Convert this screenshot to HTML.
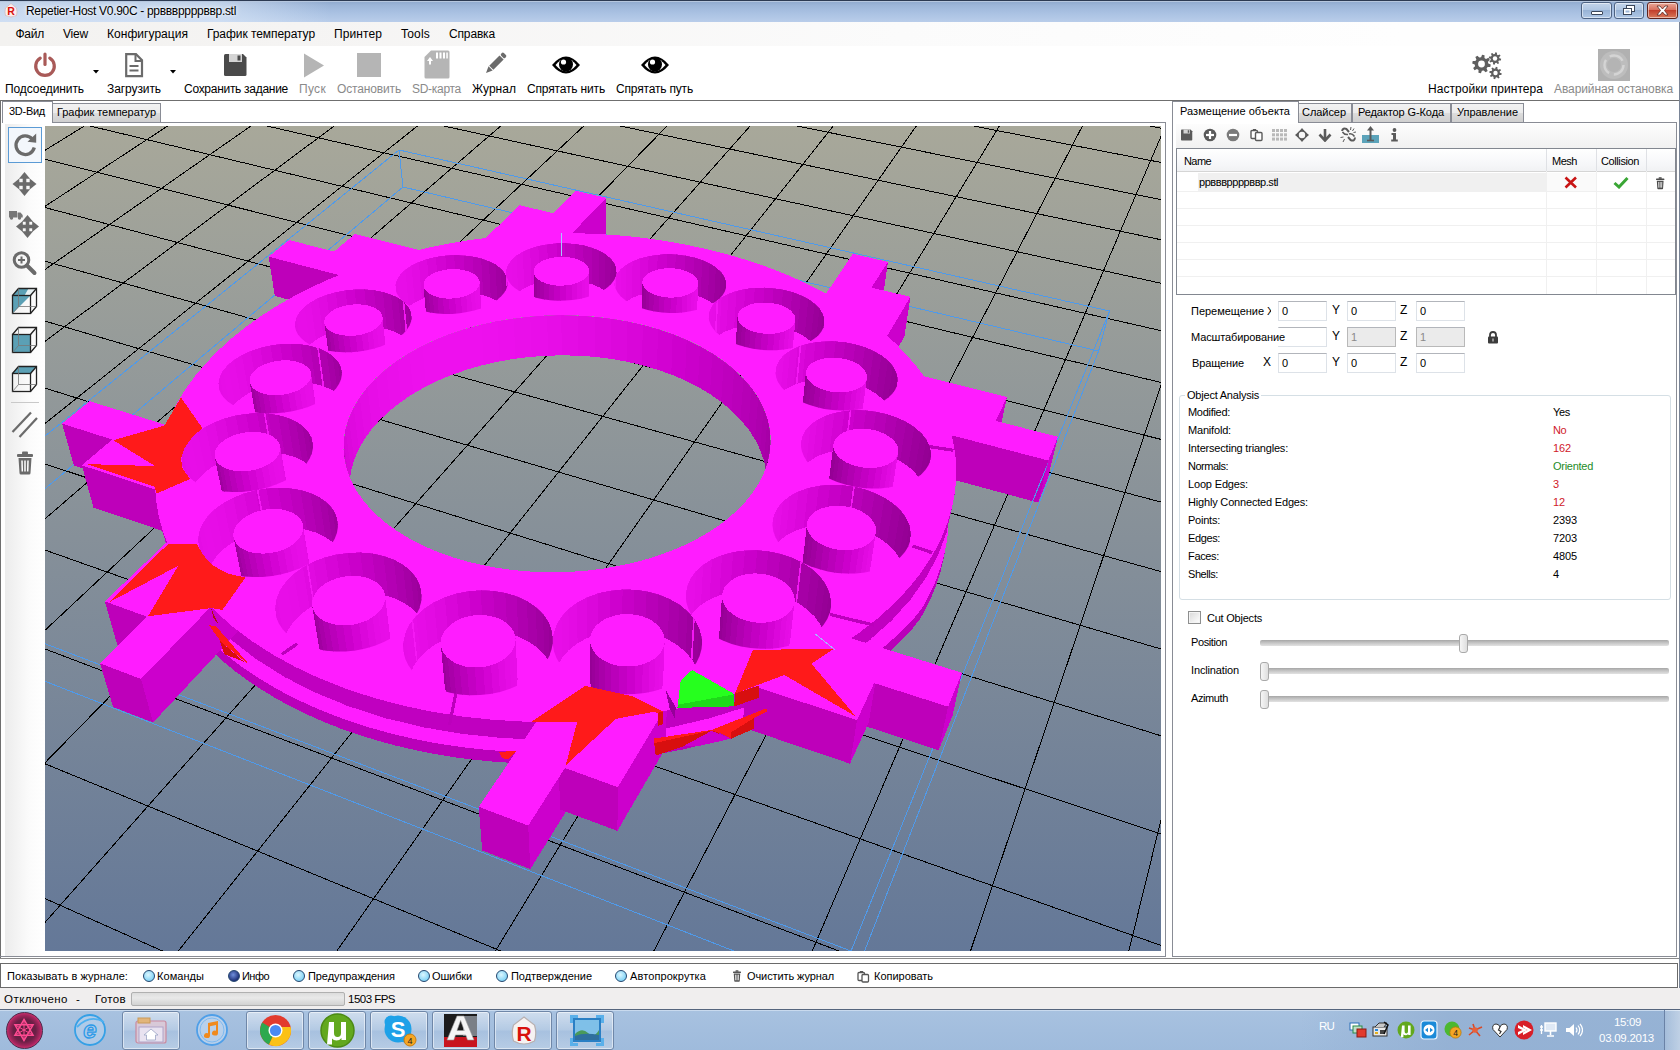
<!DOCTYPE html><html><head><meta charset="utf-8"><title>Repetier-Host</title><style>html,body{margin:0;padding:0}body{width:1680px;height:1050px;overflow:hidden;background:#fff;position:relative;font-family:"Liberation Sans",sans-serif}div,span,svg{position:absolute;box-sizing:border-box}.t{white-space:nowrap;display:block}</style></head><body><div style="left:0px;top:0px;width:1680px;height:22px;background:linear-gradient(#8ea8cc 0%,#9cb5d8 20%,#a9c1e2 55%,#b9cdea 100%);border-top:1px solid #2c3a52"></div><div style="left:0px;top:1px;width:1680px;height:1px;background:rgba(255,255,255,.35)"></div><div style="left:0px;top:2px;width:330px;height:20px;background:linear-gradient(90deg,rgba(222,234,249,.6) 0,rgba(222,234,249,.6) 65%,rgba(222,234,249,0) 100%)"></div><svg style="left:4px;top:3px" width="14" height="15" viewBox="0 0 14 15"><path d="M7,0.5 L12.5,5 Q13.5,9 12.5,12.5 Q7,15.5 1.5,12.5 Q0.5,9 1.5,5 Z" fill="#fdecec" stroke="#c9b0b0" stroke-width="0.6"/><text x="7" y="12" text-anchor="middle" font-family="Liberation Sans,sans-serif" font-weight="bold" font-size="10.5" fill="#d8100c">R</text></svg><span id="t0" class="t " style="left:26px;top:3.0px;height:16px;line-height:16px;font-size:12px;color:#000;letter-spacing:-0.307px;text-shadow:0 0 6px #fff,0 0 3px #fff;">Repetier-Host V0.90C - ррвввррррввр.stl</span><div style="left:1581px;top:2px;width:31px;height:17px;background:linear-gradient(#c3d4ea 0%,#b0c6e2 45%,#98b3d6 50%,#b0c8e6 100%);border:1px solid #4d6282;border-radius:3px;box-shadow:inset 0 0 0 1px rgba(255,255,255,.5)"></div><div style="left:1614px;top:2px;width:30px;height:17px;background:linear-gradient(#c3d4ea 0%,#b0c6e2 45%,#98b3d6 50%,#b0c8e6 100%);border:1px solid #4d6282;border-radius:3px;box-shadow:inset 0 0 0 1px rgba(255,255,255,.5)"></div><div style="left:1647px;top:2px;width:31px;height:17px;background:linear-gradient(#e9a898 0%,#d8705f 45%,#c23f2c 50%,#d9795a 100%);border:1px solid #5e231c;border-radius:3px;box-shadow:inset 0 0 0 1px rgba(255,255,255,.5)"></div><div style="left:1591px;top:11px;width:12px;height:4px;background:#fff;border:1px solid #3b4659;border-radius:1px"></div><svg style="left:1622px;top:4px" width="14" height="12" viewBox="0 0 14 12"><rect x="4.5" y="1.5" width="8" height="6" fill="#fff" stroke="#3b4659"/><rect x="1.5" y="4.5" width="8" height="6" fill="#fff" stroke="#3b4659"/><rect x="3.5" y="6.5" width="4" height="2" fill="#9db7da" stroke="none"/></svg><svg style="left:1655px;top:5px" width="15" height="11" viewBox="0 0 15 11"><path d="M2,1 L5,1 L7.5,4 L10,1 L13,1 L9.5,5.5 L13,10 L10,10 L7.5,7 L5,10 L2,10 L5.5,5.5 Z" fill="#fff" stroke="#5a2a25" stroke-width="0.8"/></svg><div style="left:0px;top:22px;width:1680px;height:24px;background:linear-gradient(90deg,#f3f2f0 0,#f5f4f3 300px,#fbfbfb 900px,#fefefe 1400px)"></div><span id="t1" class="t " style="left:15.5px;top:25.5px;height:16px;line-height:16px;font-size:12px;color:#000;letter-spacing:-0.254px;">Файл</span><span id="t2" class="t " style="left:63px;top:25.5px;height:16px;line-height:16px;font-size:12px;color:#000;letter-spacing:-0.199px;">View</span><span id="t3" class="t " style="left:107px;top:25.5px;height:16px;line-height:16px;font-size:12px;color:#000;letter-spacing:0.039px;">Конфигурация</span><span id="t4" class="t " style="left:207px;top:25.5px;height:16px;line-height:16px;font-size:12px;color:#000;letter-spacing:-0.062px;">График температур</span><span id="t5" class="t " style="left:334px;top:25.5px;height:16px;line-height:16px;font-size:12px;color:#000;letter-spacing:0.094px;">Принтер</span><span id="t6" class="t " style="left:401px;top:25.5px;height:16px;line-height:16px;font-size:12px;color:#000;letter-spacing:0.197px;">Tools</span><span id="t7" class="t " style="left:449px;top:25.5px;height:16px;line-height:16px;font-size:12px;color:#000;letter-spacing:-0.154px;">Справка</span><div style="left:0px;top:46px;width:1680px;height:54px;background:#fff"></div><div style="left:0px;top:100px;width:1680px;height:1px;background:#6f6f6f"></div><span id="t8" class="t " style="left:5px;top:81.0px;height:16px;line-height:16px;font-size:12px;color:#000;letter-spacing:-0.087px;">Подсоединить</span><span id="t9" class="t " style="left:107px;top:81.0px;height:16px;line-height:16px;font-size:12px;color:#000;letter-spacing:-0.089px;">Загрузить</span><span id="t10" class="t " style="left:184px;top:81.0px;height:16px;line-height:16px;font-size:12px;color:#000;letter-spacing:-0.284px;">Сохранить задание</span><span id="t11" class="t " style="left:299px;top:81.0px;height:16px;line-height:16px;font-size:12px;color:#8a8a8a;letter-spacing:0.312px;">Пуск</span><span id="t12" class="t " style="left:337px;top:81.0px;height:16px;line-height:16px;font-size:12px;color:#8a8a8a;letter-spacing:-0.150px;">Остановить</span><span id="t13" class="t " style="left:412px;top:81.0px;height:16px;line-height:16px;font-size:12px;color:#8a8a8a;letter-spacing:-0.289px;">SD-карта</span><span id="t14" class="t " style="left:472px;top:81.0px;height:16px;line-height:16px;font-size:12px;color:#000;letter-spacing:0.034px;">Журнал</span><span id="t15" class="t " style="left:527px;top:81.0px;height:16px;line-height:16px;font-size:12px;color:#000;letter-spacing:-0.165px;">Спрятать нить</span><span id="t16" class="t " style="left:616px;top:81.0px;height:16px;line-height:16px;font-size:12px;color:#000;letter-spacing:-0.178px;">Спрятать путь</span><span id="t17" class="t " style="left:1428px;top:81.0px;height:16px;line-height:16px;font-size:12px;color:#000;letter-spacing:0.052px;">Настройки принтера</span><span id="t18" class="t " style="left:1554px;top:81.0px;height:16px;line-height:16px;font-size:12px;color:#8a8a8a;letter-spacing:-0.090px;">Аварийная остановка</span><svg style="left:33px;top:52px" width="24" height="26" viewBox="0 0 24 26"><path d="M7.2,6.2 A9.3,9.3 0 1 0 16.8,6.2" fill="none" stroke="#a95a58" stroke-width="3.2" stroke-linecap="round"/><line x1="12" y1="2" x2="12" y2="12.5" stroke="#a95a58" stroke-width="3.2" stroke-linecap="round"/></svg><svg style="left:93px;top:70px" width="7" height="4" viewBox="0 0 7 4"><polygon points="0,0 6,0 3,3.5" fill="#000"/></svg><svg style="left:124px;top:53px" width="20" height="25" viewBox="0 0 20 25"><path d="M2.2,1.2 H12 L18,7.2 V23.2 H2.2 Z" fill="#fff" stroke="#6b6b6b" stroke-width="2.2" stroke-linejoin="miter"/><path d="M11.5,1.5 V8 H18" fill="none" stroke="#6b6b6b" stroke-width="2"/><line x1="5.5" y1="13" x2="14.5" y2="13" stroke="#6b6b6b" stroke-width="2"/><line x1="5.5" y1="17.5" x2="14.5" y2="17.5" stroke="#6b6b6b" stroke-width="2"/></svg><svg style="left:170px;top:70px" width="7" height="4" viewBox="0 0 7 4"><polygon points="0,0 6,0 3,3.5" fill="#000"/></svg><svg style="left:224px;top:53px" width="24" height="24" viewBox="0 0 24 24"><path d="M1.5,1 h17.5 l3.5,3.5 v17 q0,1.5 -1.5,1.5 h-19.5 q-1.5,0 -1.5,-1.5 v-19 q0,-1.5 1.5,-1.5 z" fill="#4a4a4a"/><rect x="5" y="1" width="13" height="8" fill="#d4d4d4"/><rect x="13.5" y="2.5" width="3" height="5" fill="#4a4a4a"/></svg><svg style="left:303px;top:53px" width="22" height="25" viewBox="0 0 22 25"><polygon points="1,0.5 21,12.5 1,24.5" fill="#b5b5b5"/></svg><svg style="left:357px;top:53px" width="24" height="24" viewBox="0 0 24 24"><rect x="0" y="0" width="24" height="24" fill="#b5b5b5"/></svg><svg style="left:424px;top:50px" width="26" height="29" viewBox="0 0 26 29"><path d="M7,0.5 H24 Q25.5,0.5 25.5,2 V27 Q25.5,28.5 24,28.5 H2 Q0.5,28.5 0.5,27 V7 Z" fill="#b5b5b5"/><g fill="#fff"><rect x="12" y="2.5" width="2" height="6"/><rect x="15.5" y="2.5" width="2" height="6"/><rect x="19" y="2.5" width="2" height="6"/><rect x="22.3" y="2.5" width="1.5" height="6"/><polygon points="6,7 3,11 5,11 5,14.5 7,14.5 7,11 9,11"/></g></svg><svg style="left:482px;top:52px" width="25" height="25" viewBox="0 0 25 25"><g transform="rotate(45 12.5 12.5)"><rect x="9.6" y="2.5" width="5.8" height="14.5" fill="#6b6b6b"/><rect x="9.6" y="-2.2" width="5.8" height="3.8" rx="1.5" fill="#6b6b6b"/><polygon points="9.6,18 15.4,18 12.5,24.5" fill="#6b6b6b"/></g></svg><svg style="left:551px;top:54px" width="30" height="22" viewBox="0 0 30 22"><path d="M1,11 Q15,-6 29,11 Q15,28 1,11 Z" fill="#000"/><path d="M4.5,11 Q15,-1.5 25.5,11 Q15,23.5 4.5,11 Z" fill="#fff"/><circle cx="15" cy="10.5" r="7" fill="#000"/><circle cx="12.5" cy="8" r="2.6" fill="#fff"/></svg><svg style="left:640px;top:54px" width="30" height="22" viewBox="0 0 30 22"><path d="M1,11 Q15,-6 29,11 Q15,28 1,11 Z" fill="#000"/><path d="M4.5,11 Q15,-1.5 25.5,11 Q15,23.5 4.5,11 Z" fill="#fff"/><circle cx="15" cy="10.5" r="7" fill="#000"/><circle cx="12.5" cy="8" r="2.6" fill="#fff"/></svg><svg style="left:1471px;top:51px" width="32" height="30" viewBox="0 0 32 30"><path d="M19.78,13.56 L19.29,16.04 L16.62,15.97 L15.59,17.51 L16.67,19.96 L14.57,21.36 L12.72,19.43 L10.91,19.79 L9.94,22.28 L7.46,21.79 L7.53,19.12 L5.99,18.09 L3.54,19.17 L2.14,17.07 L4.07,15.22 L3.71,13.41 L1.22,12.44 L1.71,9.96 L4.38,10.03 L5.41,8.49 L4.33,6.04 L6.43,4.64 L8.28,6.57 L10.09,6.21 L11.06,3.72 L13.54,4.21 L13.47,6.88 L15.01,7.91 L17.46,6.83 L18.86,8.93 L16.93,10.78 L17.29,12.59Z" fill="#5f5f5f"/><circle cx="10.5" cy="13" r="3.4" fill="#fff"/><path d="M30.19,7.87 L29.86,9.52 L27.96,9.42 L27.29,10.42 L28.11,12.14 L26.71,13.08 L25.44,11.66 L24.26,11.89 L23.63,13.69 L21.98,13.36 L22.08,11.46 L21.08,10.79 L19.36,11.61 L18.42,10.21 L19.84,8.94 L19.61,7.76 L17.81,7.13 L18.14,5.48 L20.04,5.58 L20.71,4.58 L19.89,2.86 L21.29,1.92 L22.56,3.34 L23.74,3.11 L24.37,1.31 L26.02,1.64 L25.92,3.54 L26.92,4.21 L28.64,3.39 L29.58,4.79 L28.16,6.06 L28.39,7.24Z" fill="#5f5f5f"/><circle cx="24" cy="7.5" r="2.2" fill="#fff"/><path d="M30.69,22.37 L30.36,24.02 L28.46,23.92 L27.79,24.92 L28.61,26.64 L27.21,27.58 L25.94,26.16 L24.76,26.39 L24.13,28.19 L22.48,27.86 L22.58,25.96 L21.58,25.29 L19.86,26.11 L18.92,24.71 L20.34,23.44 L20.11,22.26 L18.31,21.63 L18.64,19.98 L20.54,20.08 L21.21,19.08 L20.39,17.36 L21.79,16.42 L23.06,17.84 L24.24,17.61 L24.87,15.81 L26.52,16.14 L26.42,18.04 L27.42,18.71 L29.14,17.89 L30.08,19.29 L28.66,20.56 L28.89,21.74Z" fill="#5f5f5f"/><circle cx="24.5" cy="22" r="2.2" fill="#fff"/></svg><svg style="left:1598px;top:49px" width="32" height="32" viewBox="0 0 32 32"><rect width="32" height="32" fill="#b1b1b1"/><circle cx="16" cy="16" r="14" fill="#bdbdbd"/><circle cx="16" cy="16" r="9.5" fill="none" stroke="#d4d4d4" stroke-width="2.4" stroke-dasharray="15 5"/><circle cx="16" cy="16" r="7" fill="#b4b4b4"/></svg><div style="left:0px;top:101px;width:1px;height:858px;background:#6f6f6f"></div><div style="left:2px;top:122px;width:1164px;height:1px;background:#898c95"></div><div style="left:1165px;top:122px;width:1px;height:835px;background:#898c95"></div><div style="left:0px;top:956px;width:1166px;height:1px;background:#898c95"></div><div style="left:0px;top:958px;width:1680px;height:1px;background:#8a8a8a"></div><div style="left:2px;top:101px;width:51px;height:22px;background:#fff;border:1px solid #898c95;border-bottom:none"></div><span id="t19" class="t " style="left:9px;top:104.0px;height:15px;line-height:15px;font-size:11px;color:#000;letter-spacing:-0.271px;">3D-Вид</span><div style="left:52px;top:103px;width:109px;height:19px;background:linear-gradient(#f2f2f2,#ebebeb 50%,#dddddd 50%,#cfcfcf);border:1px solid #898c95;border-bottom:none"></div><span id="t20" class="t " style="left:57px;top:105.0px;height:15px;line-height:15px;font-size:11px;color:#000;letter-spacing:-0.057px;">График температур</span><div style="left:5px;top:124px;width:40px;height:832px;background:linear-gradient(90deg,#ececec,#fbfbfb 60%,#fff)"></div><div style="left:8px;top:127px;width:34px;height:36px;background:#f3f7fc;border:1px solid #5b9bd5"></div><svg style="left:12px;top:132px" width="26" height="26" viewBox="0 0 26 26"><path d="M20.2,7 A9.3,9.3 0 1 0 22.3,15.5" fill="none" stroke="#6b6b6b" stroke-width="3.3"/><polygon points="15.5,9.8 24.2,1.5 24.2,10.8" fill="#6b6b6b"/></svg><svg style="left:11px;top:170px" width="28" height="28" viewBox="0 0 28 28"><g stroke="#6b6b6b" stroke-width="3.6" fill="#6b6b6b" stroke-linejoin="miter"><line x1="5.5" y1="14" x2="21.5" y2="14"/><line x1="13.5" y1="6" x2="13.5" y2="22"/></g><g fill="#6b6b6b"><polygon points="1.5,14 8.3,8.399999999999999 8.3,19.6"/><polygon points="25.5,14 18.7,8.399999999999999 18.7,19.6"/><polygon points="13.5,2 7.8999999999999995,8.8 19.1,8.8"/><polygon points="13.5,26 7.8999999999999995,19.2 19.1,19.2"/></g></svg><svg style="left:8px;top:208px" width="34" height="34" viewBox="0 0 34 34"><g fill="#777"><path d="M1,3 h8 v6.5 h-8 z M9.5,4.5 h3 l2.2,2.6 v2.4 h-5.2 z"/><circle cx="3.5" cy="10" r="1.7"/><circle cx="11.5" cy="10" r="1.7"/></g><g stroke="#6b6b6b" stroke-width="3.6" fill="#6b6b6b" stroke-linejoin="miter"><line x1="12.0" y1="18.5" x2="27.0" y2="18.5"/><line x1="19.5" y1="11.0" x2="19.5" y2="26.0"/></g><g fill="#6b6b6b"><polygon points="8.0,18.5 14.8,12.899999999999999 14.8,24.1"/><polygon points="31.0,18.5 24.2,12.899999999999999 24.2,24.1"/><polygon points="19.5,7.0 13.899999999999999,13.8 25.1,13.8"/><polygon points="19.5,30.0 13.899999999999999,23.2 25.1,23.2"/></g></svg><svg style="left:11px;top:249px" width="28" height="28" viewBox="0 0 28 28"><circle cx="10.5" cy="11" r="7.3" fill="none" stroke="#6b6b6b" stroke-width="3"/><line x1="16" y1="16.5" x2="23.5" y2="24" stroke="#6b6b6b" stroke-width="4" stroke-linecap="round"/><line x1="7" y1="11" x2="14" y2="11" stroke="#6b6b6b" stroke-width="2"/><line x1="10.5" y1="7.5" x2="10.5" y2="14.5" stroke="#6b6b6b" stroke-width="2"/></svg><svg style="left:11px;top:287px" width="28" height="28" viewBox="0 0 28 28"><polygon points="1.5,8.5 19.5,8.5 1.5,26.5" fill="#5ba0b5"/><polygon points="1.5,8.5 7.5,1.5 25.5,1.5 19.5,8.5" fill="#e8f2f5"/><polygon points="1.5,8.5 7.5,1.5 17.5,1.5 13.5,8.5" fill="#5ba0b5"/><g fill="none" stroke="#222" stroke-width="1.3"><rect x="1.5" y="8.5" width="18.0" height="18.0"/><polyline points="1.5,8.5 7.5,1.5 25.5,1.5 25.5,19.5 19.5,26.5"/><line x1="19.5" y1="8.5" x2="25.5" y2="1.5"/></g><g fill="none" stroke="#777" stroke-width="0.8"><polyline points="7.5,1.5 7.5,19.5 25.5,19.5"/><line x1="1.5" y1="26.5" x2="7.5" y2="19.5"/></g></svg><svg style="left:11px;top:326px" width="28" height="28" viewBox="0 0 28 28"><rect x="1.5" y="8.5" width="18.0" height="18.0" fill="#5ba0b5"/><g fill="none" stroke="#222" stroke-width="1.3"><rect x="1.5" y="8.5" width="18.0" height="18.0"/><polyline points="1.5,8.5 7.5,1.5 25.5,1.5 25.5,19.5 19.5,26.5"/><line x1="19.5" y1="8.5" x2="25.5" y2="1.5"/></g><g fill="none" stroke="#777" stroke-width="0.8"><polyline points="7.5,1.5 7.5,19.5 25.5,19.5"/><line x1="1.5" y1="26.5" x2="7.5" y2="19.5"/></g></svg><svg style="left:11px;top:365px" width="28" height="28" viewBox="0 0 28 28"><polygon points="1.5,8.5 7.5,1.5 25.5,1.5 19.5,8.5" fill="#5ba0b5"/><g fill="none" stroke="#222" stroke-width="1.3"><rect x="1.5" y="8.5" width="18.0" height="18.0"/><polyline points="1.5,8.5 7.5,1.5 25.5,1.5 25.5,19.5 19.5,26.5"/><line x1="19.5" y1="8.5" x2="25.5" y2="1.5"/></g><g fill="none" stroke="#777" stroke-width="0.8"><polyline points="7.5,1.5 7.5,19.5 25.5,19.5"/><line x1="1.5" y1="26.5" x2="7.5" y2="19.5"/></g></svg><div style="left:11px;top:402px;width:28px;height:1px;background:#c9c9c9"></div><svg style="left:11px;top:410px" width="28" height="28" viewBox="0 0 28 28"><line x1="1.5" y1="22" x2="20" y2="2.5" stroke="#6b6b6b" stroke-width="2.2"/><line x1="8.5" y1="27" x2="26" y2="8" stroke="#6b6b6b" stroke-width="2.2"/></svg><svg style="left:14.5px;top:451px" width="20" height="25" viewBox="0 0 20 25"><g fill="#6b6b6b"><rect x="2" y="3" width="16" height="3" rx="1"/><rect x="7" y="0.5" width="6" height="3" rx="1"/><path d="M3.5,7 h13 l-1,15 q0,1.5 -1.5,1.5 h-8 q-1.5,0 -1.5,-1.5 z"/></g><g stroke="#fff" stroke-width="1.5"><line x1="7" y1="9.5" x2="7.3" y2="20.5"/><line x1="10" y1="9.5" x2="10" y2="20.5"/><line x1="13" y1="9.5" x2="12.7" y2="20.5"/></g></svg><svg style="position:absolute;left:45px;top:126px" width="1116" height="825" viewBox="45 126 1116 825"><defs><linearGradient id="gBg" x1="0" y1="0" x2="0" y2="1"><stop offset="0" stop-color="#a8a89a"/><stop offset="1" stop-color="#647898"/></linearGradient><linearGradient id="gHole" gradientUnits="userSpaceOnUse" x1="344" y1="0" x2="770" y2="0"><stop offset="0" stop-color="#ea12ea"/><stop offset="0.5" stop-color="#d604d6"/><stop offset="0.82" stop-color="#b600b6"/><stop offset="1" stop-color="#960096"/></linearGradient><linearGradient id="gWall" x1="0" y1="0" x2="1" y2="0"><stop offset="0" stop-color="#c600c6"/><stop offset="0.4" stop-color="#d806d8"/><stop offset="0.75" stop-color="#b800b8"/><stop offset="1" stop-color="#980098"/></linearGradient><linearGradient id="gPeg" x1="0" y1="0" x2="1" y2="0"><stop offset="0" stop-color="#a600a6"/><stop offset="0.2" stop-color="#c400c4"/><stop offset="0.55" stop-color="#de0cde"/><stop offset="0.85" stop-color="#c600c6"/><stop offset="1" stop-color="#b000b0"/></linearGradient><clipPath id="cHoleT"><path d="M453.1,557.4 L466.8,561.4 L481.0,564.8 L495.7,567.6 L510.7,569.8 L525.9,571.3 L541.3,572.1 L556.9,572.2 L572.4,571.7 L587.8,570.5 L603.0,568.6 L618.0,566.0 L632.7,562.9 L646.8,559.1 L660.5,554.7 L673.6,549.8 L686.1,544.4 L697.9,538.4 L708.9,532.0 L719.1,525.3 L728.4,518.1 L736.9,510.6 L744.4,502.9 L751.0,494.9 L756.7,486.8 L761.4,478.4 L765.1,470.0 L767.9,461.5 L769.7,453.0 L770.6,444.5 L770.6,436.1 L769.6,427.8 L767.8,419.6 L765.1,411.5 L761.5,403.6 L757.2,395.9 L752.1,388.5 L746.3,381.4 L739.7,374.5 L732.5,367.9 L724.7,361.7 L716.2,355.7 L707.3,350.2 L697.8,345.0 L687.8,340.2 L677.4,335.8 L666.7,331.8 L655.5,328.2 L644.1,325.1 L632.3,322.3 L620.4,320.0 L608.2,318.2 L595.9,316.7 L583.4,315.7 L570.9,315.2 L558.3,315.1 L545.7,315.4 L533.2,316.2 L520.7,317.5 L508.3,319.2 L496.1,321.3 L484.1,323.8 L472.3,326.8 L460.7,330.2 L449.5,334.1 L438.6,338.3 L428.1,342.9 L418.0,348.0 L408.4,353.4 L399.3,359.1 L390.8,365.2 L382.8,371.7 L375.5,378.4 L368.8,385.5 L362.8,392.8 L357.6,400.4 L353.1,408.2 L349.5,416.2 L346.7,424.3 L344.7,432.6 L343.6,441.0 L343.5,449.5 L344.3,458.0 L346.0,466.5 L348.8,475.0 L352.4,483.3 L357.1,491.6 L362.7,499.6 L369.3,507.5 L376.8,515.1 L385.2,522.4 L394.6,529.3 L404.8,535.9 L415.8,542.0 L427.5,547.6 L440.0,552.8Z"/></clipPath><clipPath id="cg14"><path d="M536.1,297.8 L543.0,299.3 L550.1,300.2 L557.5,300.7 L565.0,300.6 L572.4,300.0 L579.5,298.9 L586.4,297.3 L592.7,295.3 L598.5,292.8 L603.7,290.0 L608.0,286.9 L611.6,283.5 L614.2,279.9 L615.9,276.2 L616.7,272.4 L616.5,268.7 L615.4,265.0 L613.3,261.4 L610.4,258.0 L606.7,254.9 L602.3,252.0 L597.2,249.5 L591.5,247.4 L585.3,245.6 L578.8,244.3 L571.9,243.5 L564.9,243.1 L557.9,243.1 L550.9,243.7 L544.1,244.7 L537.5,246.1 L531.3,247.9 L525.6,250.2 L520.5,252.8 L516.0,255.7 L512.3,259.0 L509.4,262.4 L507.3,266.0 L506.1,269.7 L505.9,273.5 L506.7,277.3 L508.4,280.9 L511.0,284.5 L514.5,287.8 L518.9,290.8 L524.0,293.6 L529.8,295.9Z"/></clipPath><clipPath id="cg0"><path d="M423.3,311.0 L430.1,312.5 L437.2,313.5 L444.7,313.9 L452.2,313.9 L459.7,313.3 L467.1,312.1 L474.2,310.5 L480.9,308.4 L487.0,305.9 L492.5,303.0 L497.2,299.8 L501.2,296.3 L504.2,292.7 L506.3,288.9 L507.5,285.0 L507.7,281.2 L507.0,277.4 L505.3,273.7 L502.7,270.3 L499.3,267.1 L495.1,264.1 L490.2,261.6 L484.6,259.4 L478.6,257.6 L472.1,256.2 L465.3,255.4 L458.2,255.0 L451.1,255.0 L444.0,255.6 L436.9,256.6 L430.1,258.1 L423.7,260.0 L417.7,262.3 L412.2,264.9 L407.4,267.9 L403.2,271.2 L399.9,274.7 L397.5,278.4 L395.9,282.3 L395.3,286.1 L395.6,290.0 L397.0,293.7 L399.3,297.3 L402.5,300.8 L406.5,303.9 L411.4,306.7 L417.1,309.1Z"/></clipPath><clipPath id="cg13"><path d="M647.7,310.0 L654.7,311.5 L662.1,312.5 L669.6,312.9 L677.1,312.9 L684.5,312.3 L691.6,311.1 L698.4,309.5 L704.6,307.4 L710.2,304.9 L715.1,302.0 L719.2,298.8 L722.4,295.4 L724.7,291.7 L726.0,287.9 L726.4,284.1 L725.8,280.2 L724.3,276.4 L721.9,272.8 L718.6,269.4 L714.5,266.1 L709.7,263.2 L704.3,260.7 L698.3,258.5 L691.9,256.7 L685.2,255.4 L678.2,254.5 L671.1,254.1 L664.0,254.1 L656.9,254.7 L650.1,255.7 L643.7,257.2 L637.6,259.1 L632.1,261.4 L627.1,264.0 L622.9,267.0 L619.5,270.3 L616.9,273.8 L615.2,277.5 L614.4,281.3 L614.6,285.2 L615.8,289.0 L617.8,292.8 L620.9,296.4 L624.8,299.8 L629.5,302.9 L634.9,305.7 L641.0,308.1Z"/></clipPath><clipPath id="cg1"><path d="M321.6,349.1 L328.4,350.7 L335.7,351.8 L343.4,352.3 L351.2,352.2 L359.1,351.5 L366.8,350.3 L374.3,348.6 L381.4,346.3 L388.0,343.6 L393.9,340.6 L399.1,337.1 L403.5,333.4 L407.0,329.5 L409.6,325.4 L411.1,321.3 L411.7,317.2 L411.3,313.1 L409.9,309.2 L407.5,305.5 L404.3,302.1 L400.2,299.0 L395.4,296.2 L389.9,293.9 L383.8,292.0 L377.2,290.6 L370.3,289.6 L363.0,289.2 L355.6,289.3 L348.2,289.8 L340.9,290.9 L333.7,292.5 L326.9,294.5 L320.4,297.0 L314.5,299.8 L309.2,303.1 L304.6,306.6 L300.9,310.3 L298.0,314.3 L296.0,318.4 L295.0,322.5 L295.0,326.6 L296.0,330.6 L298.0,334.5 L301.0,338.1 L304.9,341.5 L309.7,344.5 L315.3,347.0Z"/></clipPath><clipPath id="cg12"><path d="M745.6,347.1 L753.0,348.7 L760.7,349.8 L768.5,350.3 L776.3,350.2 L783.9,349.5 L791.1,348.3 L798.0,346.6 L804.2,344.4 L809.8,341.7 L814.5,338.6 L818.5,335.2 L821.4,331.5 L823.5,327.6 L824.5,323.5 L824.5,319.4 L823.5,315.3 L821.6,311.3 L818.8,307.4 L815.0,303.7 L810.5,300.3 L805.3,297.2 L799.5,294.5 L793.1,292.1 L786.3,290.3 L779.2,288.8 L771.9,287.9 L764.6,287.5 L757.2,287.5 L750.0,288.1 L743.1,289.2 L736.6,290.7 L730.5,292.8 L725.0,295.2 L720.2,298.1 L716.1,301.3 L712.8,304.8 L710.5,308.5 L709.1,312.4 L708.6,316.5 L709.1,320.6 L710.7,324.7 L713.2,328.7 L716.6,332.6 L721.0,336.2 L726.1,339.5 L732.0,342.5 L738.5,345.1Z"/></clipPath><clipPath id="cg2"><path d="M244.8,410.0 L251.9,411.7 L259.5,412.9 L267.6,413.4 L275.8,413.3 L284.1,412.6 L292.4,411.3 L300.4,409.3 L308.0,406.9 L315.2,403.9 L321.6,400.4 L327.4,396.6 L332.2,392.5 L336.2,388.2 L339.1,383.7 L341.1,379.1 L341.9,374.5 L341.8,370.1 L340.5,365.7 L338.3,361.7 L335.2,357.9 L331.1,354.4 L326.2,351.4 L320.6,348.8 L314.3,346.7 L307.5,345.1 L300.2,344.1 L292.6,343.6 L284.9,343.7 L277.0,344.3 L269.2,345.5 L261.6,347.3 L254.2,349.5 L247.3,352.2 L240.9,355.4 L235.1,358.9 L230.0,362.8 L225.8,367.0 L222.4,371.3 L220.1,375.9 L218.7,380.4 L218.4,385.0 L219.2,389.4 L221.0,393.7 L223.9,397.8 L227.8,401.5 L232.6,404.8 L238.3,407.6Z"/></clipPath><clipPath id="cg11"><path d="M816.4,407.1 L824.3,408.9 L832.5,410.0 L840.7,410.5 L848.9,410.5 L856.9,409.7 L864.4,408.4 L871.5,406.5 L877.9,404.0 L883.6,401.0 L888.4,397.6 L892.3,393.8 L895.2,389.7 L897.0,385.4 L897.8,380.9 L897.6,376.4 L896.2,371.9 L893.9,367.4 L890.7,363.1 L886.5,359.1 L881.5,355.3 L875.9,351.9 L869.5,348.8 L862.7,346.3 L855.4,344.2 L847.9,342.6 L840.2,341.6 L832.4,341.1 L824.7,341.2 L817.2,341.8 L810.0,343.0 L803.2,344.7 L797.0,347.0 L791.4,349.7 L786.5,352.8 L782.4,356.3 L779.2,360.2 L777.0,364.3 L775.7,368.7 L775.5,373.2 L776.3,377.7 L778.2,382.3 L781.1,386.7 L785.0,391.0 L789.8,395.0 L795.4,398.7 L801.8,401.9 L808.9,404.8Z"/></clipPath><clipPath id="cg3"><path d="M208.5,488.1 L216.1,490.1 L224.2,491.4 L232.7,492.0 L241.5,491.9 L250.4,491.1 L259.2,489.6 L267.8,487.4 L276.0,484.6 L283.7,481.2 L290.7,477.3 L296.9,473.0 L302.2,468.3 L306.5,463.4 L309.8,458.3 L311.9,453.1 L313.0,447.9 L312.9,442.9 L311.7,438.0 L309.5,433.4 L306.2,429.1 L302.0,425.2 L296.9,421.8 L291.0,418.9 L284.4,416.5 L277.2,414.7 L269.5,413.6 L261.5,413.0 L253.2,413.1 L244.9,413.8 L236.5,415.2 L228.4,417.1 L220.5,419.7 L213.1,422.7 L206.1,426.3 L199.9,430.3 L194.4,434.7 L189.7,439.4 L186.0,444.3 L183.3,449.4 L181.7,454.6 L181.3,459.8 L181.9,464.8 L183.7,469.7 L186.7,474.3 L190.7,478.5 L195.7,482.2 L201.7,485.5Z"/></clipPath><clipPath id="cg10"><path d="M845.3,484.6 L853.8,486.6 L862.5,487.9 L871.3,488.5 L880.0,488.4 L888.5,487.6 L896.5,486.1 L904.0,483.9 L910.7,481.1 L916.7,477.7 L921.7,473.9 L925.7,469.6 L928.6,464.9 L930.5,460.0 L931.2,455.0 L930.8,449.8 L929.3,444.7 L926.7,439.7 L923.1,434.8 L918.5,430.2 L913.1,426.0 L907.0,422.1 L900.2,418.7 L892.9,415.8 L885.1,413.5 L877.0,411.7 L868.8,410.5 L860.6,410.0 L852.4,410.1 L844.5,410.8 L836.8,412.2 L829.7,414.1 L823.1,416.6 L817.2,419.7 L812.1,423.2 L807.9,427.2 L804.6,431.5 L802.3,436.2 L801.1,441.1 L800.9,446.2 L801.9,451.3 L804.0,456.5 L807.2,461.5 L811.4,466.3 L816.6,470.9 L822.7,475.0 L829.6,478.8 L837.2,482.0Z"/></clipPath><clipPath id="cg4"><path d="M227.4,572.7 L235.5,574.9 L244.1,576.4 L253.3,577.1 L262.6,577.0 L272.1,576.1 L281.5,574.3 L290.6,571.8 L299.3,568.6 L307.4,564.8 L314.8,560.4 L321.3,555.4 L326.9,550.2 L331.4,544.6 L334.7,538.8 L336.9,532.9 L337.9,527.1 L337.7,521.4 L336.4,515.8 L333.9,510.6 L330.3,505.8 L325.8,501.4 L320.2,497.5 L313.9,494.2 L306.8,491.6 L299.2,489.5 L291.0,488.2 L282.5,487.6 L273.7,487.7 L264.8,488.5 L256.0,490.1 L247.4,492.3 L239.1,495.1 L231.2,498.6 L223.9,502.6 L217.3,507.1 L211.5,512.1 L206.6,517.4 L202.8,523.0 L200.0,528.8 L198.4,534.7 L197.9,540.5 L198.7,546.2 L200.7,551.8 L203.9,556.9 L208.2,561.7 L213.7,566.0 L220.1,569.7Z"/></clipPath><clipPath id="cg9"><path d="M818.8,569.1 L827.8,571.4 L837.1,572.9 L846.5,573.6 L855.8,573.5 L864.8,572.5 L873.4,570.8 L881.4,568.3 L888.7,565.1 L895.1,561.3 L900.5,556.9 L904.9,552.0 L908.1,546.8 L910.1,541.2 L911.0,535.5 L910.6,529.6 L909.1,523.8 L906.4,518.1 L902.7,512.6 L897.9,507.4 L892.3,502.6 L885.8,498.3 L878.6,494.4 L870.9,491.2 L862.7,488.5 L854.2,486.5 L845.5,485.2 L836.7,484.6 L828.0,484.7 L819.6,485.5 L811.4,487.0 L803.8,489.2 L796.7,492.1 L790.4,495.5 L784.9,499.5 L780.3,504.0 L776.7,508.9 L774.1,514.2 L772.7,519.8 L772.5,525.5 L773.4,531.4 L775.5,537.2 L778.8,542.9 L783.1,548.4 L788.6,553.5 L795.0,558.3 L802.2,562.5 L810.2,566.2Z"/></clipPath><clipPath id="cg5"><path d="M308.2,646.6 L316.9,649.1 L326.1,650.8 L335.8,651.6 L345.7,651.4 L355.6,650.4 L365.4,648.4 L374.8,645.7 L383.8,642.1 L392.1,637.8 L399.6,632.9 L406.1,627.4 L411.6,621.6 L415.9,615.4 L419.1,609.0 L421.0,602.5 L421.7,596.0 L421.1,589.6 L419.3,583.5 L416.3,577.8 L412.3,572.4 L407.2,567.5 L401.1,563.3 L394.2,559.6 L386.6,556.7 L378.4,554.5 L369.8,553.0 L360.8,552.3 L351.6,552.5 L342.3,553.4 L333.1,555.1 L324.2,557.5 L315.6,560.6 L307.6,564.5 L300.2,568.9 L293.5,573.9 L287.7,579.4 L282.9,585.3 L279.2,591.5 L276.6,597.9 L275.3,604.4 L275.2,610.9 L276.4,617.2 L278.8,623.4 L282.5,629.1 L287.4,634.4 L293.3,639.2 L300.3,643.2Z"/></clipPath><clipPath id="cg8"><path d="M731.7,643.9 L741.0,646.4 L750.7,648.1 L760.6,648.8 L770.4,648.7 L780.0,647.7 L789.2,645.7 L797.8,643.0 L805.7,639.4 L812.7,635.1 L818.7,630.3 L823.6,624.8 L827.3,619.0 L829.8,612.8 L831.1,606.4 L831.1,599.9 L829.8,593.5 L827.4,587.2 L823.8,581.1 L819.1,575.3 L813.5,570.0 L807.0,565.2 L799.7,560.9 L791.7,557.3 L783.3,554.4 L774.5,552.2 L765.4,550.7 L756.2,550.0 L747.1,550.2 L738.1,551.1 L729.5,552.7 L721.3,555.2 L713.7,558.3 L706.8,562.1 L700.7,566.5 L695.5,571.5 L691.4,577.0 L688.3,582.9 L686.4,589.0 L685.8,595.4 L686.3,601.9 L688.2,608.3 L691.2,614.7 L695.5,620.8 L700.8,626.5 L707.3,631.8 L714.6,636.5 L722.8,640.6Z"/></clipPath><clipPath id="cg6"><path d="M440.9,690.0 L450.1,692.7 L459.8,694.4 L469.8,695.3 L479.9,695.1 L490.1,694.0 L500.0,692.0 L509.4,689.0 L518.3,685.2 L526.4,680.7 L533.7,675.5 L539.9,669.7 L544.9,663.4 L548.8,656.9 L551.4,650.1 L552.8,643.2 L552.8,636.3 L551.6,629.6 L549.2,623.1 L545.6,617.0 L540.8,611.4 L535.1,606.2 L528.5,601.7 L521.1,597.9 L513.0,594.7 L504.3,592.4 L495.3,590.9 L485.9,590.2 L476.5,590.3 L467.1,591.2 L457.8,593.0 L448.9,595.6 L440.3,598.9 L432.4,603.0 L425.2,607.7 L418.8,613.0 L413.4,618.8 L409.1,625.0 L405.8,631.6 L403.8,638.4 L403.0,645.2 L403.5,652.1 L405.3,658.9 L408.4,665.3 L412.8,671.5 L418.3,677.1 L424.9,682.1 L432.5,686.4Z"/></clipPath><clipPath id="cg7"><path d="M595.4,689.0 L604.8,691.6 L614.6,693.4 L624.7,694.2 L634.8,694.1 L644.8,693.0 L654.5,690.9 L663.7,688.0 L672.1,684.2 L679.8,679.7 L686.4,674.5 L692.0,668.7 L696.5,662.5 L699.6,655.9 L701.5,649.1 L702.2,642.2 L701.5,635.4 L699.6,628.7 L696.5,622.2 L692.2,616.1 L686.9,610.5 L680.7,605.3 L673.6,600.8 L665.7,597.0 L657.3,593.9 L648.4,591.5 L639.2,590.0 L629.9,589.3 L620.4,589.4 L611.1,590.4 L602.1,592.1 L593.4,594.7 L585.2,598.0 L577.7,602.1 L571.0,606.8 L565.2,612.1 L560.4,617.9 L556.7,624.1 L554.1,630.7 L552.8,637.4 L552.8,644.3 L554.0,651.2 L556.5,657.9 L560.3,664.4 L565.3,670.5 L571.4,676.1 L578.5,681.1 L586.5,685.4Z"/></clipPath><clipPath id="cTip7"><polygon points="1057.9,436.8 1048.3,460.5 1038.2,502.6 956.0,480.4 964.0,438.5 975.1,415.6"/></clipPath></defs><g id="ground"><rect x="45" y="126" width="1116" height="825" fill="url(#gBg)"/><g stroke="#000" stroke-width="1" shape-rendering="crispEdges"><line x1="-410.1" y1="-343.6" x2="6725.7" y2="616.3"/><line x1="-442.7" y1="-336.3" x2="7005.6" y2="692.0"/><line x1="-476.5" y1="-328.8" x2="7317.6" y2="776.4"/><line x1="-511.4" y1="-321.0" x2="7667.3" y2="871.0"/><line x1="-547.5" y1="-312.9" x2="8062.3" y2="977.8"/><line x1="-584.9" y1="-304.6" x2="8511.9" y2="1099.4"/><line x1="-623.7" y1="-295.9" x2="9028.1" y2="1239.0"/><line x1="-663.9" y1="-286.9" x2="9627.1" y2="1401.0"/><line x1="-705.6" y1="-277.6" x2="10330.5" y2="1591.2"/><line x1="-748.9" y1="-267.9" x2="11168.2" y2="1817.7"/><line x1="-793.9" y1="-257.9" x2="12182.7" y2="2092.1"/><line x1="-840.7" y1="-247.4" x2="13436.5" y2="2431.2"/><line x1="-889.4" y1="-236.6" x2="15025.7" y2="2861.0"/><line x1="-940.1" y1="-225.2" x2="17105.6" y2="3423.4"/><line x1="-993.0" y1="-213.4" x2="19945.1" y2="4191.3"/><line x1="-1048.1" y1="-201.1" x2="24053.0" y2="5302.3"/><line x1="-1105.7" y1="-188.2" x2="30523.9" y2="7052.3"/><line x1="-1166.0" y1="-174.8" x2="42219.7" y2="10215.3"/><line x1="-1229.0" y1="-160.7" x2="46145.9" y2="11734.1"/><line x1="-1294.9" y1="-146.0" x2="40369.7" y2="10847.9"/><line x1="-1364.1" y1="-130.5" x2="39361.4" y2="11192.7"/><line x1="-1436.8" y1="-114.3" x2="38290.8" y2="11558.8"/><line x1="-1513.1" y1="-97.3" x2="37151.9" y2="11948.3"/><line x1="-1593.5" y1="-79.3" x2="31920.5" y2="11031.5"/><line x1="-1678.1" y1="-60.4" x2="30636.6" y2="11388.0"/><line x1="-1767.5" y1="-40.5" x2="29271.7" y2="11766.9"/><line x1="-1861.9" y1="-19.4" x2="24662.0" y2="10874.2"/><line x1="-1961.9" y1="2.9" x2="23175.5" y2="11221.4"/><line x1="-2067.8" y1="26.6" x2="21596.6" y2="11590.3"/><line x1="-2180.4" y1="51.8" x2="19916.4" y2="11982.8"/><line x1="-2300.2" y1="78.5" x2="15900.3" y2="11059.1"/><line x1="-2427.9" y1="107.0" x2="14118.6" y2="11418.2"/><line x1="-2564.4" y1="137.5" x2="12224.1" y2="11800.0"/><line x1="-2710.6" y1="170.1" x2="8804.2" y2="10900.7"/><line x1="-2867.5" y1="205.2" x2="6830.2" y2="11250.4"/><line x1="-3036.4" y1="242.9" x2="4732.9" y2="11622.0"/><line x1="-3218.7" y1="283.6" x2="2500.4" y2="12017.6"/><line x1="-3416.1" y1="327.7" x2="-275.6" y2="11086.9"/><line x1="-3630.6" y1="375.6" x2="-2564.9" y2="11448.7"/><line x1="-3864.4" y1="427.8" x2="-4999.7" y2="11833.5"/><line x1="-4120.2" y1="485.0" x2="-7205.7" y2="10927.4"/><line x1="-4401.5" y1="547.8" x2="-9676.7" y2="11279.7"/><line x1="-4712.0" y1="617.1" x2="-12302.8" y2="11654.2"/><line x1="-5056.8" y1="694.1" x2="-13966.5" y2="10771.8"/><line x1="-5441.6" y1="780.0" x2="-16609.5" y2="11115.0"/><line x1="-5874.1" y1="876.6" x2="-19416.3" y2="11479.5"/><line x1="-6363.5" y1="985.9" x2="-22402.5" y2="11867.3"/><line x1="-6922.0" y1="1110.6" x2="-23370.0" y2="10954.4"/><line x1="-7565.2" y1="1254.3" x2="-26347.6" y2="11309.3"/><line x1="-8314.1" y1="1421.5" x2="-29513.1" y2="11686.6"/><line x1="-9196.9" y1="1618.7" x2="-29964.6" y2="10797.8"/><line x1="-10253.3" y1="1854.6" x2="-33103.6" y2="11143.4"/><line x1="484.3" y1="-402.0" x2="-31510.8" y2="10968.0"/><line x1="512.3" y1="-399.4" x2="-29964.6" y2="10797.8"/><line x1="540.6" y1="-396.8" x2="-28463.1" y2="10632.4"/><line x1="569.4" y1="-394.2" x2="-27004.3" y2="10471.8"/><line x1="598.6" y1="-391.5" x2="-25586.5" y2="10315.7"/><line x1="628.1" y1="-388.7" x2="-24207.9" y2="10163.9"/><line x1="658.1" y1="-386.0" x2="-22867.0" y2="10016.2"/><line x1="688.4" y1="-383.2" x2="-21562.2" y2="9872.5"/><line x1="719.2" y1="-380.3" x2="-20292.1" y2="9732.7"/><line x1="750.4" y1="-377.5" x2="-19055.4" y2="9596.5"/><line x1="782.1" y1="-374.5" x2="-22402.5" y2="11867.3"/><line x1="814.2" y1="-371.6" x2="-20885.9" y2="11670.3"/><line x1="846.8" y1="-368.6" x2="-19416.3" y2="11479.5"/><line x1="879.8" y1="-365.5" x2="-17991.5" y2="11294.5"/><line x1="913.3" y1="-362.4" x2="-16609.5" y2="11115.0"/><line x1="947.3" y1="-359.3" x2="-15268.4" y2="10940.9"/><line x1="981.8" y1="-356.1" x2="-13966.5" y2="10771.8"/><line x1="1016.8" y1="-352.9" x2="-12702.0" y2="10607.6"/><line x1="1052.4" y1="-349.6" x2="-11473.3" y2="10448.1"/><line x1="1088.4" y1="-346.3" x2="-10278.9" y2="10293.0"/><line x1="1125.1" y1="-342.9" x2="-9117.5" y2="10142.2"/><line x1="1162.2" y1="-339.5" x2="-7987.7" y2="9995.5"/><line x1="1200.0" y1="-336.0" x2="-6888.2" y2="9852.7"/><line x1="1238.3" y1="-332.5" x2="-5817.7" y2="9713.7"/><line x1="1277.3" y1="-328.9" x2="-4775.3" y2="9578.3"/><line x1="1316.8" y1="-325.2" x2="-4999.7" y2="11833.5"/><line x1="1357.0" y1="-321.5" x2="-3763.3" y2="11638.1"/><line x1="1397.8" y1="-317.8" x2="-2564.9" y2="11448.7"/><line x1="1439.3" y1="-313.9" x2="-1402.9" y2="11265.0"/><line x1="1481.4" y1="-310.0" x2="-275.6" y2="11086.9"/><line x1="1524.3" y1="-306.1" x2="818.4" y2="10914.0"/><line x1="1567.8" y1="-302.1" x2="1880.7" y2="10746.1"/><line x1="1612.1" y1="-298.0" x2="2912.6" y2="10583.1"/><line x1="1657.1" y1="-293.8" x2="3915.3" y2="10424.6"/><line x1="1702.9" y1="-289.6" x2="4890.2" y2="10270.5"/><line x1="1749.5" y1="-285.3" x2="5838.3" y2="10120.7"/><line x1="1796.9" y1="-280.9" x2="6760.8" y2="9974.9"/><line x1="1845.1" y1="-276.5" x2="7658.6" y2="9833.1"/><line x1="1894.1" y1="-272.0" x2="8532.7" y2="9694.9"/><line x1="1944.0" y1="-267.4" x2="11231.2" y2="12000.1"/><line x1="1994.8" y1="-262.7" x2="12224.1" y2="11800.0"/><line x1="2046.6" y1="-257.9" x2="13186.1" y2="11606.1"/><line x1="2099.2" y1="-253.1" x2="14118.6" y2="11418.2"/><line x1="2152.9" y1="-248.1" x2="15022.9" y2="11235.9"/><line x1="2207.5" y1="-243.1" x2="15900.3" y2="11059.1"/><line x1="2263.1" y1="-237.9" x2="16752.0" y2="10887.4"/><line x1="2319.8" y1="-232.7" x2="17579.0" y2="10720.7"/><line x1="2377.6" y1="-227.4" x2="18382.6" y2="10558.7"/><line x1="2436.5" y1="-221.9" x2="19163.5" y2="10401.3"/><line x1="2496.5" y1="-216.4" x2="19922.8" y2="10248.3"/><line x1="2557.7" y1="-210.8" x2="20661.4" y2="10099.4"/><line x1="2620.2" y1="-205.0" x2="21380.0" y2="9954.6"/></g><g stroke="#4f9aea" stroke-width="1" shape-rendering="crispEdges"><line x1="399.0" y1="150.0" x2="1109.5" y2="311.0"/><line x1="399.0" y1="150.0" x2="-25.8" y2="493.2"/><line x1="1109.5" y1="311.0" x2="838.1" y2="983.0"/><line x1="-35.6" y1="613.0" x2="851.0" y2="951.0"/><line x1="403.0" y1="187.0" x2="1098.6" y2="351.0"/><line x1="403.0" y1="187.0" x2="-26.6" y2="549.1"/><line x1="1098.6" y1="351.0" x2="841.6" y2="1009.9"/><line x1="3.5" y1="665.0" x2="875.0" y2="1006.2"/><line x1="399.0" y1="150.0" x2="403.0" y2="187.0"/><line x1="1109.5" y1="311.0" x2="1098.6" y2="351.0"/></g></g><g shape-rendering="crispEdges"><polygon points="606.3,235.9 557.8,287.9 557.0,248.8 606.4,197.8" fill="#cc00cc"/><polygon points="557.7,252.5 522.1,289.4 520.6,250.3 556.9,214.0" fill="#cc00cc"/><polygon points="484.6,279.9 522.1,289.4 520.6,250.3 482.4,241.0" fill="#be00ba"/><polygon points="526.3,280.0 557.8,287.9 557.0,248.8 524.9,241.1" fill="#be00ba"/><polygon points="336.7,292.8 405.9,311.2 402.1,271.8 331.6,253.7" fill="#be00ba"/><polygon points="274.8,295.9 373.7,322.7 369.2,283.0 268.6,256.7" fill="#be00ba"/><polygon points="427.8,290.4 405.9,311.2 402.1,271.8 424.5,251.3" fill="#cc00cc"/><polygon points="392.7,304.9 373.7,322.7 369.2,283.0 388.6,265.5" fill="#cc00cc"/><polygon points="882.5,301.1 845.8,360.2 850.9,320.0 887.9,261.9" fill="#cc00cc"/><polygon points="904.4,336.7 879.3,380.0 885.1,339.4 910.5,296.8" fill="#cc00cc"/><polygon points="810.0,351.2 845.8,360.2 850.9,320.0 814.2,311.1" fill="#be00ba"/><polygon points="835.2,368.8 879.3,380.0 885.1,339.4 840.1,328.4" fill="#be00ba"/><polygon points="998.2,438.4 985.9,465.5 994.5,423.8 1006.9,397.1" fill="#cc00cc"/><polygon points="896.1,441.6 985.9,465.5 994.5,423.8 902.6,400.2" fill="#be00ba"/><polygon points="73.8,465.4 182.9,501.3 173.3,459.1 62.1,423.6" fill="#be00ba"/><polygon points="1047.8,478.7 1038.2,502.6 1048.3,460.5 1057.9,436.8" fill="#cc00cc"/><polygon points="208.5,477.3 182.9,501.3 173.3,459.1 199.6,435.5" fill="#cc00cc"/><polygon points="905.4,466.7 1038.2,502.6 1048.3,460.5 912.2,425.0" fill="#be00ba"/><polygon points="93.5,507.5 172.0,534.1 161.8,491.6 81.8,465.3" fill="#be00ba"/><polygon points="202.0,641.2 214.7,653.9 212.1,642.6 199.3,629.9" fill="#b900b9"/><polygon points="212.1,651.4 225.9,663.8 223.4,652.5 209.5,640.1" fill="#b900b9"/><polygon points="223.0,661.3 237.9,673.4 235.4,662.1 220.5,650.1" fill="#b900b9"/><polygon points="234.8,671.0 250.7,682.6 248.3,671.3 232.4,659.7" fill="#b900b9"/><polygon points="247.5,680.3 264.4,691.5 262.1,680.2 245.1,669.1" fill="#b900b9"/><polygon points="260.9,689.3 278.8,700.1 276.6,688.8 258.6,678.0" fill="#b900b9"/><polygon points="275.1,698.0 294.0,708.2 291.8,696.9 272.9,686.7" fill="#b900b9"/><polygon points="290.1,706.2 309.9,715.8 307.8,704.5 288.0,694.9" fill="#b900b9"/><polygon points="305.8,714.0 326.4,723.0 324.5,711.7 303.8,702.6" fill="#b900b9"/><polygon points="322.3,721.3 343.7,729.7 341.9,718.4 320.3,709.9" fill="#b900b9"/><polygon points="339.3,728.1 361.5,735.8 359.8,724.5 337.5,716.7" fill="#b900b9"/><polygon points="357.0,734.3 379.9,741.4 378.4,730.1 355.3,723.0" fill="#b900b9"/><polygon points="375.3,740.1 398.9,746.4 397.4,735.1 373.7,728.7" fill="#b900b9"/><polygon points="394.1,745.2 418.3,750.8 417.0,739.5 392.6,733.9" fill="#b900b9"/><polygon points="413.4,749.8 438.1,754.6 436.9,743.3 412.1,738.5" fill="#b900b9"/><polygon points="433.1,753.7 458.2,757.8 457.2,746.5 431.9,742.4" fill="#b900b9"/><polygon points="453.2,757.1 478.7,760.3 477.8,749.0 452.1,745.7" fill="#b900b9"/><polygon points="473.6,759.7 499.4,762.2 498.6,750.8 472.6,748.4" fill="#b900b9"/><polygon points="494.2,761.8 520.2,763.4 519.6,752.0 493.4,750.4" fill="#b900b9"/><polygon points="515.0,763.1 541.2,763.9 540.7,752.5 514.4,751.8" fill="#b900b9"/><polygon points="535.9,763.8 562.2,763.7 561.9,752.4 535.5,752.5" fill="#b900b9"/><polygon points="556.9,763.8 583.1,762.9 583.0,751.6 556.6,752.5" fill="#b900b9"/><polygon points="577.9,763.2 604.0,761.4 604.0,750.1 577.8,751.8" fill="#b900b9"/><polygon points="598.8,761.8 624.8,759.2 624.9,747.9 598.8,750.5" fill="#b900b9"/><polygon points="619.6,759.8 645.3,756.4 645.6,745.1 619.7,748.5" fill="#b900b9"/><polygon points="640.2,757.2 665.5,753.0 666.0,741.7 640.5,745.9" fill="#b900b9"/><polygon points="660.5,753.9 685.4,748.9 686.1,737.6 660.9,742.6" fill="#b900b9"/><polygon points="680.5,750.0 705.0,744.2 705.7,732.9 681.1,738.7" fill="#b900b9"/><polygon points="700.1,745.4 724.0,738.9 724.9,727.6 700.9,734.1" fill="#b900b9"/><polygon points="719.3,740.3 742.6,733.1 743.6,721.8 720.2,729.0" fill="#b900b9"/><polygon points="738.0,734.6 760.7,726.7 761.8,715.4 739.0,723.3" fill="#b900b9"/><polygon points="756.2,728.4 778.1,719.8 779.4,708.5 757.3,717.0" fill="#b900b9"/><polygon points="773.8,721.6 794.9,712.4 796.3,701.1 775.0,710.3" fill="#b900b9"/><polygon points="790.8,714.3 811.1,704.6 812.5,693.3 792.1,703.0" fill="#b900b9"/><polygon points="807.1,706.6 826.5,696.3 828.0,685.0 808.5,695.3" fill="#b900b9"/><polygon points="822.7,698.4 841.2,687.6 842.8,676.3 824.2,687.1" fill="#b900b9"/><polygon points="837.6,689.8 855.1,678.5 856.8,667.2 839.2,678.5" fill="#b900b9"/><polygon points="851.7,680.8 868.2,669.1 870.1,657.8 853.4,669.5" fill="#b900b9"/><polygon points="865.0,671.5 880.6,659.4 882.5,648.1 866.8,660.2" fill="#b900b9"/><polygon points="877.6,661.8 892.1,649.4 894.0,638.1 879.5,650.6" fill="#b900b9"/><polygon points="889.3,651.9 902.8,639.1 904.8,627.9 891.2,640.6" fill="#b900b9"/><polygon points="900.2,641.7 912.6,628.7 914.6,617.5 902.2,630.5" fill="#b900b9"/><polygon points="910.2,631.3 920.9,617.7 923.0,606.5 912.3,620.1" fill="#b900b9"/><polygon points="919.2,620.6 927.1,606.2 929.2,595.0 921.3,609.4" fill="#b900b9"/><polygon points="925.6,609.1 932.4,594.7 934.6,583.5 927.8,597.9" fill="#b900b9"/><polygon points="931.2,597.5 936.9,583.2 939.0,572.0 933.3,586.4" fill="#b900b9"/><polygon points="935.9,586.0 940.5,571.7 942.6,560.6 938.0,574.9" fill="#b900b9"/><polygon points="939.7,574.5 943.2,560.3 945.4,549.2 941.8,563.4" fill="#b900b9"/><polygon points="942.6,563.1 945.2,549.0 947.3,537.9 944.8,552.0" fill="#b900b9"/><polygon points="200.6,631.2 207.9,638.6 215.8,645.9 224.1,653.1 232.8,660.1 242.0,666.9 251.6,673.5 261.7,680.0 272.1,686.2 283.0,692.3 294.3,698.1 306.0,703.7 318.0,709.0 330.4,714.0 343.1,718.8 356.2,723.3 369.5,727.5 383.2,731.4 397.1,735.0 411.3,738.3 425.7,741.3 440.3,743.9 455.1,746.2 470.0,748.1 485.1,749.7 500.3,751.0 515.6,751.8 530.9,752.4 546.3,752.6 561.7,752.4 577.1,751.9 592.5,751.0 607.8,749.7 623.0,748.1 638.1,746.2 653.0,743.9 667.8,741.3 682.4,738.4 696.9,735.1 711.0,731.5 725.0,727.6 738.7,723.4 752.1,718.9 765.1,714.1 777.9,709.1 790.3,703.8 802.4,698.2 814.1,692.4 825.4,686.4 836.4,680.2 846.9,673.7 857.0,667.1 866.7,660.3 876.0,653.3 884.8,646.2 893.2,638.9 901.2,631.5 908.6,623.9 915.7,616.3 921.9,608.4 926.6,600.0 930.9,591.6 934.7,583.2 938.0,574.9 940.9,566.5 943.3,558.2 945.2,549.9 946.8,541.7 947.9,533.5 948.5,525.4 931.8,522.1 929.2,530.8 926.2,539.4 922.6,548.1 918.4,556.8 913.7,565.4 908.5,573.9 902.6,582.4 896.2,590.8 889.2,599.0 881.7,607.2 873.6,615.2 865.0,623.1 855.8,630.8 846.0,638.3 835.8,645.6 825.0,652.7 813.7,659.5 801.9,666.1 789.6,672.4 776.9,678.4 763.8,684.2 750.2,689.6 736.3,694.6 721.9,699.3 707.2,703.7 692.3,707.7 677.0,711.3 661.5,714.5 645.7,717.3 629.8,719.7 613.7,721.6 597.4,723.2 581.1,724.3 564.7,725.0 548.3,725.2 532.0,725.0 515.6,724.4 499.4,723.3 483.2,721.8 467.3,719.9 451.5,717.5 435.9,714.8 420.6,711.6 405.5,708.0 390.8,704.1 376.4,699.8 362.4,695.1 348.8,690.0 335.5,684.7 322.8,679.0 310.4,673.0 298.6,666.7 287.3,660.1 276.4,653.3 266.1,646.2 256.3,638.9 247.1,631.4 238.4,623.8 230.3,615.9" fill="#ff1cff"/><polygon points="945.6,536.1 951.4,510.4 954.8,493.2 948.9,518.8" fill="#c000c0"/><polygon points="162.4,531.3 170.1,557.0 165.9,539.6 158.2,514.0" fill="#c000c0"/><polygon points="936.8,558.3 946.6,532.5 950.0,515.2 940.1,540.9" fill="#c000c0"/><polygon points="168.8,553.5 180.5,579.0 176.3,561.6 164.5,536.1" fill="#c000c0"/><polygon points="924.6,580.2 938.4,554.7 941.8,537.3 927.8,562.8" fill="#c000c0"/><polygon points="178.6,575.5 194.5,600.6 190.4,583.1 174.4,558.1" fill="#c000c0"/><polygon points="908.8,601.8 926.8,576.7 930.0,559.3 912.0,584.3" fill="#c000c0"/><polygon points="192.0,597.2 212.1,621.6 208.1,604.0 187.9,579.7" fill="#c000c0"/><polygon points="889.5,622.7 911.6,598.4 914.7,580.9 892.5,605.1" fill="#c000c0"/><polygon points="209.0,618.3 233.2,641.6 229.4,624.0 205.0,600.7" fill="#c000c0"/><polygon points="866.7,642.6 892.8,619.4 895.9,601.8 869.5,625.0" fill="#c000c0"/><polygon points="229.6,638.5 257.9,660.5 254.3,642.8 225.8,620.9" fill="#c000c0"/><polygon points="840.5,661.4 870.6,639.5 873.4,621.9 843.1,643.7" fill="#c000c0"/><polygon points="253.7,657.5 285.8,677.8 282.5,660.2 250.1,639.9" fill="#c000c0"/><polygon points="811.1,678.7 845.0,658.5 847.5,640.8 813.4,661.0" fill="#c000c0"/><polygon points="281.2,675.2 316.9,693.5 313.9,675.8 277.8,657.5" fill="#c000c0"/><polygon points="778.8,694.3 816.1,676.0 818.4,658.4 780.7,676.6" fill="#c000c0"/><polygon points="311.8,691.1 350.9,707.2 348.2,689.5 308.7,673.4" fill="#c000c0"/><polygon points="743.7,707.9 784.1,691.9 786.1,674.2 745.3,690.2" fill="#c000c0"/><polygon points="345.3,705.2 387.3,718.8 385.0,701.1 342.5,687.5" fill="#c000c0"/><polygon points="706.3,719.3 749.5,705.8 751.1,688.1 707.5,701.6" fill="#c000c0"/><polygon points="381.4,717.1 425.9,727.9 424.0,710.2 379.0,699.4" fill="#c000c0"/><polygon points="667.0,728.3 712.4,717.6 713.7,699.9 667.8,710.6" fill="#c000c0"/><polygon points="419.6,726.6 466.1,734.6 464.6,716.8 417.6,708.9" fill="#c000c0"/><polygon points="626.3,734.8 673.4,727.0 674.2,709.3 626.6,717.1" fill="#c000c0"/><polygon points="459.6,733.7 507.4,738.5 506.4,720.8 458.0,715.9" fill="#c000c0"/><polygon points="584.6,738.6 632.9,733.9 633.3,716.2 584.5,720.9" fill="#c000c0"/><polygon points="500.7,738.1 549.3,739.7 548.8,722.0 499.6,720.3" fill="#c000c0"/><polygon points="542.6,739.7 591.4,738.2 591.3,720.5 542.0,722.0" fill="#c000c0"/><polygon points="203.6,504.0 172.0,534.1 161.8,491.6 194.4,461.8" fill="#cc00cc"/><polygon points="227.2,595.6 163.4,661.9 152.0,618.5 218.0,552.6" fill="#cc00cc"/><polygon points="117.2,644.7 163.4,661.9 152.0,618.5 104.8,601.4" fill="#be00ba"/><polygon points="247.1,621.6 153.1,722.5 141.0,679.0 238.2,578.5" fill="#cc00cc"/><polygon points="113.1,707.0 153.1,722.5 141.0,679.0 100.0,663.4" fill="#be00ba"/><polygon points="952.4,716.3 938.7,750.3 948.1,706.7 961.9,672.8" fill="#cc00cc"/><polygon points="784.5,699.5 938.7,750.3 948.1,706.7 789.4,656.0" fill="#be00ba"/><polygon points="868.8,722.4 850.0,763.7 857.0,720.1 876.1,678.9" fill="#cc00cc"/><polygon points="742.4,727.3 850.0,763.7 857.0,720.1 746.3,683.7" fill="#be00ba"/><polygon points="665.2,748.6 617.4,830.9 617.9,787.2 667.0,705.0" fill="#cc00cc"/><polygon points="605.1,748.5 530.3,869.1 528.2,825.6 605.2,704.9" fill="#cc00cc"/><polygon points="560.0,809.5 617.4,830.9 617.9,787.2 558.8,765.8" fill="#be00ba"/><polygon points="482.2,850.4 530.3,869.1 528.2,825.6 478.7,806.8" fill="#be00ba"/><g clip-path="url(#cHoleT)"><polygon points="564.6,355.3 545.5,355.7 544.4,315.5 563.8,315.1" fill="#e70de7"/><polygon points="581.0,355.8 561.9,355.3 561.2,315.1 580.6,315.6" fill="#e40ce4"/><polygon points="548.1,355.6 529.1,357.0 527.7,316.7 547.1,315.4" fill="#e90ee9"/><polygon points="597.2,357.1 578.3,355.6 577.9,315.4 597.2,316.9" fill="#e20ae2"/><polygon points="531.7,356.7 512.9,359.0 511.1,318.7 530.3,316.5" fill="#ea0fea"/><polygon points="613.3,359.2 594.6,356.8 594.5,316.6 613.6,318.9" fill="#df09df"/><polygon points="515.5,358.6 496.9,361.9 494.8,321.5 513.7,318.4" fill="#ec0fec"/><polygon points="629.0,362.1 610.7,358.8 611.0,318.5 629.6,321.8" fill="#dc08dc"/><polygon points="499.4,361.3 481.3,365.5 478.8,325.1 497.4,321.0" fill="#ed10ed"/><polygon points="644.4,365.7 626.5,361.6 627.1,321.3 645.3,325.4" fill="#d906d9"/><polygon points="483.8,364.8 466.1,369.9 463.3,329.4 481.4,324.5" fill="#ee10ee"/><polygon points="659.2,370.2 642.0,365.1 642.8,324.8 660.5,329.8" fill="#d504d5"/><polygon points="468.5,369.1 451.4,375.0 448.3,334.5 465.8,328.7" fill="#ee10ee"/><polygon points="673.5,375.4 656.9,369.4 658.1,329.0 675.0,334.9" fill="#d202d2"/><polygon points="453.7,374.1 437.3,380.9 433.9,340.3 450.7,333.6" fill="#ee10ee"/><polygon points="687.1,381.3 671.3,374.5 672.7,334.0 688.9,340.7" fill="#ce00ce"/><polygon points="439.5,379.9 424.0,387.5 420.3,346.8 436.2,339.3" fill="#ee10ee"/><polygon points="699.9,387.9 685.0,380.3 686.7,339.7 702.0,347.3" fill="#ca00ca"/><polygon points="426.1,386.4 411.4,394.8 407.4,354.0 422.4,345.7" fill="#ed10ed"/><polygon points="711.9,395.2 697.9,386.8 700.0,346.2 714.3,354.5" fill="#c600c6"/><polygon points="413.4,393.5 399.8,402.7 395.5,361.8 409.4,352.8" fill="#ec0fec"/><polygon points="722.9,403.2 710.0,394.0 712.4,353.3 725.5,362.3" fill="#c200c2"/><polygon points="401.6,401.4 389.1,411.2 384.6,370.2 397.4,360.5" fill="#ea0fea"/><polygon points="732.9,411.8 721.2,401.9 723.8,361.0 735.8,370.8" fill="#be00be"/><polygon points="390.7,409.8 379.5,420.3 374.7,379.2 386.3,368.8" fill="#e90ee9"/><polygon points="741.8,420.9 731.4,410.4 734.2,369.4 744.8,379.8" fill="#ba00ba"/><polygon points="380.9,418.8 371.1,429.9 366.1,388.7 376.2,377.7" fill="#e70de7"/><polygon points="749.4,430.6 740.4,419.4 743.5,378.3 752.7,389.3" fill="#b600b6"/><polygon points="372.3,428.4 363.9,440.0 358.7,398.6 367.4,387.1" fill="#e40ce4"/><polygon points="755.8,440.7 748.3,429.0 751.5,387.7 759.2,399.3" fill="#b200b2"/><polygon points="364.9,438.4 358.0,450.6 352.7,409.0 359.8,397.0" fill="#e20ae2"/><polygon points="760.8,451.2 754.9,439.0 758.3,397.7 764.4,409.7" fill="#ae00ae"/><polygon points="358.9,448.8 353.6,461.4 348.1,419.7 353.6,407.3" fill="#df09df"/><polygon points="764.4,462.1 760.1,449.5 763.6,408.0 768.0,420.4" fill="#ab00ab"/><polygon points="354.2,459.7 350.7,472.5 345.1,430.7 348.8,418.0" fill="#dc08dc"/><polygon points="766.4,473.2 763.9,460.3 767.5,418.7 770.2,431.4" fill="#a700a7"/><polygon points="351.0,470.7 349.3,483.9 343.6,441.9 345.5,429.0" fill="#d906d9"/><polygon points="766.9,484.5 766.2,471.4 769.9,429.7 770.7,442.6" fill="#a400a4"/><polygon points="349.4,482.0 349.5,495.3 343.7,453.2 343.7,440.1" fill="#d504d5"/><polygon points="765.8,496.0 766.9,482.7 770.7,440.8 769.6,453.9" fill="#a100a1"/></g><path d="M345.3,688.5 L372.6,697.5 L401.1,705.2 L430.8,711.5 L461.3,716.4 L492.5,719.8 L524.1,721.6 L556.0,721.9 L587.9,720.7 L619.5,717.9 L650.6,713.6 L681.1,707.9 L710.6,700.7 L739.0,692.3 L766.1,682.5 L791.8,671.6 L815.9,659.7 L838.3,646.8 L858.8,633.1 L877.5,618.6 L894.2,603.5 L908.9,587.9 L921.6,571.9 L932.3,555.6 L941.0,539.1 L947.6,522.5 L952.4,506.0 L955.3,489.5 L956.3,473.1 L955.5,457.0 L953.1,441.2 L949.0,425.7 L943.4,410.7 L936.3,396.0 L927.9,381.9 L918.1,368.3 L907.1,355.3 L895.0,342.9 L881.7,331.0 L867.5,319.8 L852.4,309.2 L836.5,299.3 L819.7,290.1 L802.3,281.5 L784.2,273.6 L765.5,266.4 L746.3,259.9 L726.6,254.2 L706.5,249.1 L686.1,244.7 L665.4,241.0 L644.4,238.0 L623.1,235.7 L601.8,234.2 L580.3,233.3 L558.8,233.1 L537.2,233.7 L515.7,235.0 L494.3,236.9 L473.0,239.6 L451.8,243.0 L430.9,247.1 L410.3,251.9 L390.0,257.4 L370.1,263.6 L350.7,270.4 L331.8,278.0 L313.4,286.3 L295.6,295.3 L278.6,304.9 L262.3,315.2 L246.9,326.2 L232.3,337.7 L218.8,350.0 L206.3,362.8 L195.0,376.1 L184.9,390.1 L176.2,404.5 L168.8,419.4 L162.9,434.7 L158.6,450.4 L155.9,466.4 L155.0,482.7 L155.8,499.1 L158.6,515.7 L163.2,532.3 L169.8,548.9 L178.5,565.3 L189.1,581.4 L201.9,597.2 L216.6,612.5 L233.4,627.3 L252.1,641.3 L272.8,654.6 L295.3,667.0 L319.5,678.3Z M453.1,557.4 L466.8,561.4 L481.0,564.8 L495.7,567.6 L510.7,569.8 L525.9,571.3 L541.3,572.1 L556.9,572.2 L572.4,571.7 L587.8,570.5 L603.0,568.6 L618.0,566.0 L632.7,562.9 L646.8,559.1 L660.5,554.7 L673.6,549.8 L686.1,544.4 L697.9,538.4 L708.9,532.0 L719.1,525.3 L728.4,518.1 L736.9,510.6 L744.4,502.9 L751.0,494.9 L756.7,486.8 L761.4,478.4 L765.1,470.0 L767.9,461.5 L769.7,453.0 L770.6,444.5 L770.6,436.1 L769.6,427.8 L767.8,419.6 L765.1,411.5 L761.5,403.6 L757.2,395.9 L752.1,388.5 L746.3,381.4 L739.7,374.5 L732.5,367.9 L724.7,361.7 L716.2,355.7 L707.3,350.2 L697.8,345.0 L687.8,340.2 L677.4,335.8 L666.7,331.8 L655.5,328.2 L644.1,325.1 L632.3,322.3 L620.4,320.0 L608.2,318.2 L595.9,316.7 L583.4,315.7 L570.9,315.2 L558.3,315.1 L545.7,315.4 L533.2,316.2 L520.7,317.5 L508.3,319.2 L496.1,321.3 L484.1,323.8 L472.3,326.8 L460.7,330.2 L449.5,334.1 L438.6,338.3 L428.1,342.9 L418.0,348.0 L408.4,353.4 L399.3,359.1 L390.8,365.2 L382.8,371.7 L375.5,378.4 L368.8,385.5 L362.8,392.8 L357.6,400.4 L353.1,408.2 L349.5,416.2 L346.7,424.3 L344.7,432.6 L343.6,441.0 L343.5,449.5 L344.3,458.0 L346.0,466.5 L348.8,475.0 L352.4,483.3 L357.1,491.6 L362.7,499.6 L369.3,507.5 L376.8,515.1 L385.2,522.4 L394.6,529.3 L404.8,535.9 L415.8,542.0 L427.5,547.6 L440.0,552.8Z" fill="#ff1cff" fill-rule="evenodd"/><polygon points="575.5,190.8 524.9,241.1 557.0,248.8 606.4,197.8" fill="#ff1cff"/><polygon points="519.7,205.3 482.4,241.0 520.6,250.3 556.9,214.0" fill="#ff1cff"/><polygon points="852.9,253.9 814.2,311.1 850.9,320.0 887.9,261.9" fill="#ff1cff"/><polygon points="867.0,286.6 840.1,328.4 885.1,339.4 910.5,296.8" fill="#ff1cff"/><polygon points="199.0,565.0 100.0,663.4 141.0,679.0 238.2,578.5" fill="#ff1cff"/><polygon points="172.2,537.1 104.8,601.4 152.0,618.5 218.0,552.6" fill="#ff1cff"/><polygon points="558.6,688.8 478.7,806.8 528.2,825.6 605.2,704.9" fill="#ff1cff"/><polygon points="610.3,685.8 558.8,765.8 617.9,787.2 667.0,705.0" fill="#ff1cff"/><polygon points="289.2,240.1 268.6,256.7 369.2,283.0 388.6,265.5" fill="#ff1cff"/><polygon points="355.0,233.9 331.6,253.7 402.1,271.8 424.5,251.3" fill="#ff1cff"/><polygon points="89.7,401.2 62.1,423.6 173.3,459.1 199.6,435.5" fill="#ff1cff"/><polygon points="115.6,436.7 81.8,465.3 161.8,491.6 194.4,461.8" fill="#ff1cff"/><polygon points="924.2,402.6 912.2,425.0 1048.3,460.5 1057.9,436.8" fill="#ff1cff"/><polygon points="916.7,374.5 902.6,400.2 994.5,423.8 1006.9,397.1" fill="#ff1cff"/><polygon points="806.2,624.3 789.4,656.0 948.1,706.7 961.9,672.8" fill="#ff1cff"/><polygon points="768.0,644.4 746.3,683.7 857.0,720.1 876.1,678.9" fill="#ff1cff"/><line x1="281.9" y1="654.3" x2="297.1" y2="643.8" stroke="#bc00bc" stroke-width="3.2"/><line x1="455.8" y1="693.5" x2="449.5" y2="724.8" stroke="#bc00bc" stroke-width="3.2"/><line x1="830.1" y1="614.5" x2="874.3" y2="625.2" stroke="#bc00bc" stroke-width="3.2"/><line x1="912.4" y1="545.9" x2="932.3" y2="552.8" stroke="#bc00bc" stroke-width="3.2"/><line x1="929.0" y1="446.5" x2="953.4" y2="450.3" stroke="#bc00bc" stroke-width="3.2"/><g clip-path="url(#cg14)"><polygon points="566.6,279.8 556.6,279.9 555.8,243.2 566.0,243.1" fill="#c900c9"/><polygon points="557.3,279.9 547.5,280.9 546.6,244.2 556.6,243.2" fill="#d002d0"/><polygon points="575.7,280.5 565.8,279.7 565.2,243.1 575.3,243.8" fill="#c200c2"/><polygon points="584.4,282.1 575.0,280.4 574.5,243.7 584.1,245.4" fill="#bb00bb"/><polygon points="548.2,280.8 538.9,282.7 537.8,246.0 547.3,244.1" fill="#d705d7"/><polygon points="539.5,282.6 530.8,285.3 529.6,248.6 538.4,245.8" fill="#dc08dc"/><polygon points="592.5,284.4 583.7,281.9 583.4,245.2 592.4,247.7" fill="#b300b3"/><polygon points="599.7,287.5 591.9,284.2 591.7,247.5 599.7,250.7" fill="#ac00ac"/><polygon points="531.4,285.1 523.7,288.6 522.3,251.8 530.2,248.3" fill="#e10ae1"/><polygon points="524.2,288.3 517.7,292.5 516.2,255.6 522.9,251.5" fill="#e50ce5"/><polygon points="605.8,291.2 599.2,287.2 599.2,250.4 606.0,254.3" fill="#a500a5"/><polygon points="518.1,292.2 512.9,296.9 511.3,259.9 516.6,255.3" fill="#e70de7"/><polygon points="610.7,295.4 605.4,290.9 605.5,254.0 610.9,258.5" fill="#a000a0"/><polygon points="513.2,296.5 509.6,301.7 508.0,264.6 511.7,259.6" fill="#e80de8"/><polygon points="614.2,300.1 610.4,295.1 610.6,258.2 614.4,263.1" fill="#9b009b"/><polygon points="616.0,305.1 613.9,299.7 614.2,262.7 616.3,268.0" fill="#970097"/><polygon points="509.8,301.3 507.9,306.7 506.2,269.6 508.2,264.2" fill="#e80de8"/><polygon points="507.9,306.3 507.8,311.8 506.1,274.6 506.3,269.2" fill="#e60de6"/><polygon points="616.3,310.2 615.9,304.6 616.2,267.6 616.6,273.0" fill="#940094"/><polygon points="589.0,310.1 589.1,306.9 588.9,269.8 588.8,273.0" fill="#e70de7"/><polygon points="534.9,309.3 535.8,312.6 534.6,275.4 533.7,272.2" fill="#960096"/><polygon points="587.6,313.1 589.0,309.9 588.8,272.8 587.4,275.9" fill="#e80de8"/><polygon points="535.7,312.4 537.9,315.4 536.7,278.2 534.5,275.2" fill="#9b009b"/><polygon points="585.1,315.9 587.7,312.9 587.5,275.7 584.8,278.7" fill="#e70de7"/><polygon points="537.7,315.2 541.0,317.9 540.0,280.6 536.6,278.0" fill="#a100a1"/><polygon points="581.5,318.4 585.3,315.8 585.0,278.5 581.2,281.1" fill="#e50ce5"/><polygon points="540.8,317.8 545.1,320.1 544.1,282.7 539.7,280.5" fill="#a900a9"/><polygon points="577.1,320.4 581.8,318.2 581.5,280.9 576.7,283.1" fill="#e10ae1"/><polygon points="544.8,319.9 550.0,321.7 549.1,284.3 543.8,282.6" fill="#b100b1"/><polygon points="572.0,321.9 577.4,320.3 577.0,283.0 571.5,284.6" fill="#db07db"/><polygon points="549.7,321.6 555.4,322.7 554.6,285.3 548.7,284.2" fill="#ba00ba"/><polygon points="566.5,322.8 572.4,321.8 571.9,284.5 565.9,285.4" fill="#d403d4"/><polygon points="555.0,322.6 561.1,323.1 560.4,285.7 554.2,285.3" fill="#c300c3"/><polygon points="560.7,323.0 566.9,322.8 566.2,285.4 560.0,285.7" fill="#cc00cc"/></g><path d="M548.9,284.3 L553.0,285.1 L557.3,285.6 L561.7,285.7 L566.0,285.4 L570.3,284.8 L574.4,283.8 L578.1,282.6 L581.3,281.0 L584.1,279.2 L586.3,277.2 L587.9,275.1 L588.8,272.9 L589.0,270.6 L588.6,268.4 L587.5,266.2 L585.7,264.2 L583.4,262.3 L580.5,260.7 L577.2,259.3 L573.5,258.2 L569.5,257.4 L565.3,257.0 L561.0,256.9 L556.8,257.1 L552.6,257.7 L548.6,258.6 L545.0,259.8 L541.7,261.3 L538.9,263.0 L536.7,265.0 L535.0,267.1 L534.0,269.3 L533.6,271.5 L534.0,273.8 L535.0,276.0 L536.6,278.1 L538.9,280.0 L541.8,281.7 L545.1,283.1Z" fill="#ff1cff"/><g clip-path="url(#cg0)"><polygon points="457.4,291.8 447.3,292.4 444.5,255.5 454.8,254.9" fill="#cd00cd"/><polygon points="466.7,292.2 456.6,291.8 454.1,254.9 464.3,255.3" fill="#c600c6"/><polygon points="448.0,292.3 438.1,293.8 435.2,256.9 445.3,255.4" fill="#d303d3"/><polygon points="438.8,293.7 429.4,296.1 426.3,259.1 435.9,256.8" fill="#d906d9"/><polygon points="475.6,293.4 465.9,292.1 463.5,255.2 473.3,256.5" fill="#be00be"/><polygon points="483.9,295.4 474.9,293.2 472.6,256.3 481.8,258.5" fill="#b700b7"/><polygon points="430.1,295.9 421.4,299.1 418.1,262.1 427.0,258.9" fill="#df09df"/><polygon points="491.4,298.2 483.3,295.2 481.1,258.3 489.4,261.2" fill="#af00af"/><polygon points="422.0,298.8 414.3,302.7 410.9,265.7 418.8,261.8" fill="#e30be3"/><polygon points="497.8,301.7 490.8,298.0 488.8,261.0 495.9,264.7" fill="#a800a8"/><polygon points="414.8,302.4 408.4,307.0 404.9,269.8 411.5,265.3" fill="#e60ce6"/><polygon points="502.9,305.8 497.3,301.4 495.4,264.4 501.2,268.7" fill="#a200a2"/><polygon points="408.8,306.6 403.8,311.7 400.2,274.5 405.3,269.5" fill="#e80de8"/><polygon points="506.7,310.4 502.6,305.5 500.8,268.4 505.0,273.2" fill="#9d009d"/><polygon points="404.1,311.3 400.7,316.7 397.0,279.4 400.5,274.1" fill="#e80de8"/><polygon points="400.9,316.3 399.2,321.9 395.4,284.5 397.2,279.0" fill="#e70de7"/><polygon points="508.8,315.3 506.4,310.0 504.7,272.8 507.2,278.1" fill="#980098"/><polygon points="509.4,320.5 508.7,314.9 507.0,277.7 507.7,283.2" fill="#950095"/><polygon points="399.2,321.5 399.3,327.1 395.6,289.7 395.5,284.1" fill="#e50ce5"/><line x1="508.6" y1="314.6" x2="506.9" y2="277.3" stroke="#f418f4" stroke-width="1.6"/><polygon points="426.7,322.1 427.4,325.4 424.1,288.0 423.5,284.8" fill="#960096"/><polygon points="481.4,323.0 481.9,319.6 479.7,282.3 479.2,285.6" fill="#e70de7"/><polygon points="427.3,325.2 429.2,328.4 426.0,290.9 424.1,287.8" fill="#9b009b"/><polygon points="479.7,326.0 481.5,322.8 479.3,285.4 477.5,288.6" fill="#e80de8"/><polygon points="429.0,328.2 432.1,331.0 429.0,293.4 425.8,290.7" fill="#a100a1"/><polygon points="476.9,328.9 479.8,325.8 477.6,288.4 474.6,291.4" fill="#e70de7"/><polygon points="431.9,330.8 436.1,333.1 433.0,295.6 428.7,293.3" fill="#a900a9"/><polygon points="473.1,331.4 477.1,328.7 474.8,291.2 470.7,293.9" fill="#e50ce5"/><polygon points="435.8,333.0 440.8,334.8 437.8,297.2 432.7,295.5" fill="#b100b1"/><polygon points="468.4,333.5 473.3,331.3 471.0,293.7 465.9,295.9" fill="#e10ae1"/><polygon points="440.5,334.7 446.2,335.8 443.3,298.2 437.5,297.1" fill="#ba00ba"/><polygon points="463.1,335.0 468.7,333.4 466.3,295.8 460.5,297.4" fill="#db07db"/><polygon points="445.8,335.8 451.9,336.2 449.1,298.6 442.9,298.2" fill="#c300c3"/><polygon points="457.4,335.9 463.5,334.9 460.9,297.4 454.7,298.3" fill="#d403d4"/><polygon points="451.5,336.2 457.8,335.9 455.1,298.3 448.7,298.6" fill="#cc00cc"/></g><path d="M437.6,297.2 L441.7,298.0 L446.0,298.5 L450.4,298.6 L454.9,298.3 L459.3,297.7 L463.5,296.7 L467.3,295.4 L470.8,293.8 L473.8,292.0 L476.3,289.9 L478.1,287.8 L479.2,285.5 L479.7,283.2 L479.5,280.9 L478.6,278.7 L477.0,276.6 L474.9,274.7 L472.1,273.0 L468.9,271.6 L465.3,270.5 L461.3,269.7 L457.1,269.2 L452.8,269.1 L448.5,269.3 L444.2,269.9 L440.1,270.9 L436.3,272.1 L432.8,273.6 L429.8,275.4 L427.3,277.4 L425.4,279.5 L424.1,281.8 L423.5,284.1 L423.6,286.4 L424.4,288.7 L425.9,290.8 L428.0,292.8 L430.7,294.5 L434.0,296.0Z" fill="#ff1cff"/><g clip-path="url(#cg13)"><polygon points="675.2,291.2 665.1,290.9 666.3,254.1 676.6,254.3" fill="#c600c6"/><polygon points="684.4,292.4 674.4,291.1 675.8,254.3 685.9,255.5" fill="#bf00bf"/><polygon points="665.9,290.9 655.9,291.5 656.9,254.7 667.1,254.1" fill="#cd00cd"/><polygon points="693.1,294.3 683.6,292.2 685.1,255.4 694.8,257.4" fill="#b700b7"/><polygon points="656.6,291.5 647.1,293.0 647.9,256.1 657.7,254.6" fill="#d403d4"/><polygon points="647.7,292.9 638.8,295.3 639.5,258.4 648.6,256.0" fill="#da06da"/><polygon points="701.1,297.1 692.4,294.1 694.1,257.2 703.0,260.1" fill="#b000b0"/><polygon points="708.3,300.5 700.5,296.8 702.4,259.9 710.3,263.5" fill="#a900a9"/><polygon points="639.5,295.1 631.5,298.3 632.1,261.4 640.2,258.2" fill="#df09df"/><polygon points="714.3,304.6 707.7,300.2 709.7,263.2 716.4,267.5" fill="#a300a3"/><polygon points="632.0,298.1 625.2,302.0 625.7,265.0 632.6,261.1" fill="#e30be3"/><polygon points="625.6,301.7 620.2,306.3 620.5,269.2 626.1,264.7" fill="#e60ce6"/><polygon points="719.0,309.1 713.9,304.2 715.9,267.2 721.2,272.0" fill="#9d009d"/><polygon points="722.2,314.1 718.7,308.8 720.9,271.6 724.5,276.8" fill="#990099"/><polygon points="620.5,305.9 616.6,311.0 616.9,273.8 620.9,268.8" fill="#e80de8"/><polygon points="723.9,319.2 722.0,313.7 724.3,276.4 726.2,281.9" fill="#950095"/><polygon points="616.8,310.6 614.6,316.0 614.8,278.8 617.1,273.5" fill="#e80de8"/><polygon points="614.7,315.6 614.2,321.2 614.4,283.9 614.9,278.4" fill="#e70de7"/><polygon points="723.9,324.4 723.8,318.8 726.1,281.5 726.2,287.0" fill="#930093"/><line x1="615.2" y1="314.1" x2="615.4" y2="276.8" stroke="#f418f4" stroke-width="1.6"/><polygon points="641.8,318.0 641.8,321.4 642.5,284.0 642.5,280.8" fill="#930093"/><polygon points="695.4,325.1 696.5,321.8 698.3,284.4 697.1,287.6" fill="#e80de8"/><polygon points="641.7,321.2 643.0,324.5 643.8,287.1 642.5,283.8" fill="#960096"/><polygon points="693.1,327.9 695.5,324.9 697.3,287.5 694.9,290.5" fill="#e70de7"/><polygon points="642.9,324.3 645.4,327.4 646.2,289.9 643.7,286.9" fill="#9b009b"/><polygon points="689.8,330.4 693.3,327.7 695.0,290.3 691.5,292.9" fill="#e50ce5"/><polygon points="645.2,327.2 648.8,330.0 649.7,292.5 646.0,289.7" fill="#a100a1"/><polygon points="685.5,332.5 690.0,330.3 691.7,292.8 687.1,295.0" fill="#e10ae1"/><polygon points="648.6,329.8 653.2,332.1 654.2,294.6 649.5,292.3" fill="#a900a9"/><polygon points="680.5,334.0 685.8,332.4 687.4,294.9 682.0,296.5" fill="#db07db"/><polygon points="652.8,332.0 658.2,333.8 659.3,296.2 653.8,294.5" fill="#b100b1"/><polygon points="675.0,334.9 680.9,333.9 682.4,296.4 676.4,297.4" fill="#d403d4"/><polygon points="657.9,333.7 663.8,334.8 665.0,297.2 659.0,296.1" fill="#ba00ba"/><polygon points="669.2,335.2 675.4,334.9 676.8,297.3 670.5,297.6" fill="#cc00cc"/><polygon points="663.4,334.8 669.6,335.2 670.9,297.6 664.6,297.2" fill="#c300c3"/></g><path d="M659.2,296.2 L663.4,297.0 L667.7,297.5 L672.2,297.6 L676.6,297.3 L680.9,296.7 L684.8,295.7 L688.4,294.4 L691.6,292.9 L694.2,291.0 L696.2,289.0 L697.6,286.8 L698.3,284.5 L698.3,282.2 L697.6,279.9 L696.2,277.7 L694.3,275.6 L691.7,273.7 L688.6,272.1 L685.1,270.7 L681.3,269.5 L677.2,268.7 L672.9,268.3 L668.5,268.2 L664.3,268.4 L660.1,269.0 L656.2,270.0 L652.6,271.2 L649.5,272.7 L646.9,274.5 L644.8,276.5 L643.3,278.6 L642.5,280.9 L642.4,283.2 L643.0,285.5 L644.2,287.7 L646.1,289.8 L648.6,291.8 L651.7,293.5 L655.2,295.0Z" fill="#ff1cff"/><g clip-path="url(#cg1)"><polygon points="359.7,326.7 349.3,327.8 344.6,290.3 355.3,289.3" fill="#d001d0"/><polygon points="369.4,326.7 359.0,326.8 354.5,289.3 365.1,289.3" fill="#c900c9"/><polygon points="350.0,327.7 339.8,329.7 334.9,292.2 345.4,290.2" fill="#d605d6"/><polygon points="340.5,329.5 330.8,332.4 325.8,294.9 335.7,292.0" fill="#dc07dc"/><polygon points="378.7,327.6 368.6,326.7 364.3,289.2 374.6,290.2" fill="#c100c1"/><polygon points="387.5,329.4 378.0,327.5 373.8,290.0 383.5,291.9" fill="#ba00ba"/><polygon points="331.5,332.2 322.7,335.9 317.4,298.3 326.5,294.6" fill="#e10ae1"/><polygon points="395.4,332.0 386.8,329.2 382.8,291.7 391.5,294.5" fill="#b200b2"/><polygon points="323.3,335.6 315.5,340.1 310.1,302.5 318.1,298.0" fill="#e40ce4"/><polygon points="316.0,339.8 309.5,344.9 304.0,307.2 310.6,302.1" fill="#e70de7"/><polygon points="402.2,335.5 394.8,331.8 390.9,294.3 398.5,297.9" fill="#ab00ab"/><polygon points="407.7,339.6 401.7,335.2 398.0,297.6 404.1,301.9" fill="#a500a5"/><polygon points="309.9,344.5 305.0,350.1 299.3,312.3 304.4,306.8" fill="#e80de8"/><polygon points="305.3,349.6 302.0,355.5 296.3,317.6 299.6,311.8" fill="#e80de8"/><polygon points="411.9,344.3 407.4,339.2 403.7,301.6 408.3,306.6" fill="#9f009f"/><polygon points="414.4,349.4 411.6,343.9 408.0,306.2 410.9,311.6" fill="#9a009a"/><polygon points="302.2,355.1 300.7,361.1 294.9,323.1 296.4,317.2" fill="#e60de6"/><polygon points="415.2,354.8 414.3,349.0 410.7,311.2 411.7,317.0" fill="#960096"/><polygon points="300.7,360.7 301.1,366.7 295.3,328.6 295.0,322.7" fill="#e40be4"/><line x1="407.1" y1="339.0" x2="403.5" y2="301.4" stroke="#f418f4" stroke-width="1.6"/><polygon points="385.9,359.9 386.7,356.3 382.6,318.4 381.8,321.9" fill="#e70de7"/><polygon points="329.8,362.3 331.5,365.6 326.3,327.6 324.6,324.3" fill="#9b009b"/><polygon points="383.9,363.1 386.0,359.6 381.9,321.7 379.7,325.1" fill="#e80de8"/><polygon points="331.3,365.4 334.3,368.4 329.1,330.3 326.1,327.4" fill="#a100a1"/><polygon points="380.7,366.2 384.1,362.9 379.9,324.9 376.5,328.1" fill="#e70de7"/><polygon points="334.0,368.2 338.1,370.7 333.1,332.6 328.9,330.2" fill="#a900a9"/><polygon points="376.6,368.9 381.0,366.0 376.7,328.0 372.2,330.8" fill="#e50ce5"/><polygon points="337.9,370.6 342.9,372.5 337.9,334.3 332.8,332.5" fill="#b100b1"/><polygon points="371.5,371.1 376.9,368.7 372.5,330.6 367.1,333.0" fill="#e10ae1"/><polygon points="342.6,372.4 348.4,373.6 343.5,335.4 337.6,334.2" fill="#ba00ba"/><polygon points="365.9,372.7 371.9,371.0 367.5,332.9 361.4,334.6" fill="#db07db"/><polygon points="348.0,373.5 354.3,374.0 349.5,335.8 343.1,335.4" fill="#c300c3"/><polygon points="359.9,373.7 366.3,372.6 361.8,334.5 355.3,335.6" fill="#d403d4"/><polygon points="353.9,374.0 360.3,373.7 355.7,335.5 349.1,335.8" fill="#cc00cc"/></g><path d="M337.7,334.3 L341.8,335.2 L346.2,335.7 L350.8,335.8 L355.5,335.5 L360.1,334.9 L364.5,333.8 L368.6,332.4 L372.4,330.7 L375.6,328.8 L378.4,326.6 L380.4,324.2 L381.9,321.8 L382.6,319.3 L382.5,316.9 L381.8,314.5 L380.4,312.3 L378.3,310.2 L375.7,308.4 L372.5,306.9 L368.8,305.7 L364.8,304.9 L360.5,304.4 L356.1,304.3 L351.6,304.6 L347.1,305.2 L342.8,306.2 L338.7,307.5 L335.0,309.1 L331.7,311.0 L328.9,313.2 L326.7,315.5 L325.2,317.9 L324.4,320.3 L324.3,322.8 L324.9,325.2 L326.2,327.5 L328.2,329.6 L330.8,331.4 L334.0,333.0Z" fill="#ff1cff"/><g clip-path="url(#cg12)"><polygon points="771.2,325.6 760.8,324.8 763.8,287.4 774.4,288.1" fill="#c300c3"/><polygon points="761.6,324.8 751.2,325.1 754.0,287.7 764.6,287.5" fill="#ca00ca"/><polygon points="780.6,327.2 770.4,325.5 773.6,288.1 784.0,289.7" fill="#bb00bb"/><polygon points="752.0,325.1 742.0,326.3 744.7,288.9 754.8,287.7" fill="#d102d1"/><polygon points="789.6,329.6 779.9,327.0 783.2,289.6 793.1,292.1" fill="#b400b4"/><polygon points="797.8,332.9 788.9,329.4 792.4,291.9 801.5,295.3" fill="#ad00ad"/><polygon points="742.7,326.2 733.4,328.4 735.9,290.9 745.4,288.8" fill="#d705d7"/><polygon points="805.0,336.8 797.1,332.6 800.9,295.1 808.9,299.2" fill="#a600a6"/><polygon points="734.1,328.2 725.6,331.3 728.0,293.8 736.6,290.7" fill="#dd08dd"/><polygon points="726.2,331.0 719.0,334.9 721.2,297.4 728.6,293.5" fill="#e10ae1"/><polygon points="811.0,341.4 804.5,336.5 808.3,298.9 815.0,303.7" fill="#a000a0"/><polygon points="719.4,334.6 713.6,339.2 715.7,301.6 721.7,297.1" fill="#e50ce5"/><polygon points="815.7,346.4 810.6,341.0 814.6,303.4 819.8,308.7" fill="#9b009b"/><polygon points="818.8,351.8 815.4,346.0 819.5,308.3 823.0,314.0" fill="#970097"/><polygon points="713.9,338.9 709.6,344.1 711.7,306.4 716.1,301.3" fill="#e70de7"/><polygon points="820.3,357.3 818.6,351.3 822.8,313.5 824.5,319.4" fill="#940094"/><polygon points="709.9,343.7 707.2,349.3 709.3,311.5 712.0,306.0" fill="#e80de8"/><polygon points="707.4,348.9 706.6,354.8 708.6,316.9 709.4,311.1" fill="#e80de8"/><polygon points="820.0,362.9 820.2,356.9 824.4,319.0 824.3,324.9" fill="#920092"/><line x1="715.4" y1="337.6" x2="717.5" y2="300.0" stroke="#f418f4" stroke-width="1.6"/><polygon points="790.9,361.2 791.8,357.7 795.5,319.8 794.6,323.3" fill="#e80de8"/><polygon points="735.0,353.7 735.3,357.3 737.9,319.4 737.6,315.9" fill="#930093"/><polygon points="788.9,364.2 791.0,361.0 794.7,323.0 792.5,326.2" fill="#e70de7"/><polygon points="735.2,357.1 736.8,360.6 739.5,322.6 737.8,319.2" fill="#960096"/><polygon points="785.7,366.9 789.0,364.0 792.7,326.1 789.3,328.9" fill="#e50ce5"/><polygon points="736.7,360.4 739.5,363.7 742.2,325.7 739.3,322.4" fill="#9b009b"/><polygon points="781.4,369.1 785.9,366.8 789.5,328.7 785.0,331.1" fill="#e10ae1"/><polygon points="739.3,363.5 743.3,366.4 746.1,328.4 742.0,325.5" fill="#a100a1"/><polygon points="776.4,370.8 781.7,369.0 785.3,330.9 779.8,332.7" fill="#db07db"/><polygon points="743.0,366.3 748.0,368.7 750.9,330.7 745.8,328.2" fill="#a900a9"/><polygon points="770.8,371.7 776.8,370.7 780.2,332.6 774.1,333.6" fill="#d403d4"/><polygon points="747.7,368.6 753.4,370.5 756.4,332.4 750.5,330.6" fill="#b100b1"/><polygon points="764.8,372.0 771.2,371.7 774.5,333.6 768.0,333.9" fill="#cc00cc"/><polygon points="753.0,370.4 759.2,371.6 762.3,333.5 756.0,332.3" fill="#ba00ba"/><polygon points="758.8,371.5 765.2,372.0 768.5,333.9 761.9,333.4" fill="#c300c3"/></g><path d="M756.2,332.4 L760.6,333.3 L765.2,333.8 L769.8,333.9 L774.3,333.6 L778.6,332.9 L782.7,331.9 L786.3,330.5 L789.4,328.8 L791.9,326.9 L793.8,324.7 L795.0,322.4 L795.5,319.9 L795.3,317.5 L794.4,315.0 L792.7,312.7 L790.5,310.4 L787.7,308.4 L784.4,306.6 L780.6,305.1 L776.5,303.9 L772.2,303.1 L767.8,302.6 L763.3,302.5 L758.9,302.8 L754.6,303.4 L750.7,304.4 L747.1,305.7 L744.0,307.3 L741.5,309.2 L739.5,311.3 L738.2,313.6 L737.6,316.0 L737.7,318.5 L738.5,320.9 L740.0,323.3 L742.1,325.6 L744.9,327.7 L748.2,329.5 L752.0,331.1Z" fill="#ff1cff"/><g clip-path="url(#cg2)"><polygon points="287.0,382.2 276.0,383.7 269.6,345.4 280.9,343.9" fill="#d202d2"/><polygon points="276.8,383.6 266.0,386.2 259.5,347.8 270.4,345.3" fill="#d806d8"/><polygon points="297.2,381.8 286.2,382.3 280.0,344.0 291.3,343.6" fill="#cb00cb"/><polygon points="266.8,385.9 256.7,389.5 249.9,351.1 260.3,347.6" fill="#de08de"/><polygon points="307.1,382.5 296.4,381.8 290.5,343.6 301.4,344.2" fill="#c400c4"/><polygon points="316.4,384.1 306.3,382.4 300.6,344.1 310.9,345.8" fill="#bc00bc"/><polygon points="257.4,389.2 248.2,393.6 241.2,355.2 250.6,350.8" fill="#e20ae2"/><polygon points="324.9,386.7 315.7,384.0 310.1,345.7 319.5,348.4" fill="#b500b5"/><polygon points="248.8,393.3 240.7,398.5 233.6,360.0 241.8,354.8" fill="#e50ce5"/><polygon points="332.3,390.2 324.3,386.5 318.8,348.2 327.0,351.8" fill="#ae00ae"/><polygon points="241.3,398.1 234.6,403.9 227.3,365.3 234.1,359.6" fill="#e70de7"/><polygon points="235.1,403.5 230.0,409.8 222.6,371.1 227.8,364.9" fill="#e80de8"/><polygon points="338.4,394.5 331.8,389.9 326.5,351.5 333.2,356.1" fill="#a700a7"/><polygon points="343.0,399.5 337.9,394.1 332.7,355.7 337.8,361.0" fill="#a100a1"/><polygon points="230.3,409.3 227.1,415.9 219.6,377.1 222.9,370.6" fill="#e70de7"/><polygon points="345.9,405.0 342.6,399.0 337.5,360.6 340.8,366.4" fill="#9c009c"/><polygon points="227.3,415.4 226.0,422.0 218.4,383.2 219.8,376.7" fill="#e60ce6"/><polygon points="226.0,421.5 226.7,428.1 219.1,389.2 218.4,382.8" fill="#e30be3"/><polygon points="347.1,410.9 345.7,404.5 340.6,366.0 342.0,372.2" fill="#970097"/><line x1="323.4" y1="386.2" x2="318.0" y2="347.9" stroke="#f418f4" stroke-width="1.6"/><polygon points="316.9,414.8 316.6,411.0 310.9,372.3 311.2,376.1" fill="#e40be4"/><polygon points="256.7,421.2 258.2,424.9 251.3,386.1 249.7,382.4" fill="#9b009b"/><polygon points="315.9,418.5 317.0,414.6 311.3,375.9 310.1,379.8" fill="#e70de7"/><polygon points="258.1,424.7 261.0,428.0 254.1,389.1 251.1,385.8" fill="#a100a1"/><polygon points="313.6,422.1 316.0,418.3 310.3,379.5 307.7,383.4" fill="#e80de8"/><polygon points="260.8,427.8 264.9,430.5 258.1,391.6 253.9,388.9" fill="#a900a9"/><polygon points="310.0,425.5 313.7,421.9 307.9,383.1 304.1,386.7" fill="#e70de7"/><polygon points="264.6,430.4 269.8,432.5 263.1,393.5 257.8,391.5" fill="#b100b1"/><polygon points="305.5,428.5 310.3,425.3 304.4,386.5 299.4,389.6" fill="#e50ce5"/><polygon points="269.5,432.4 275.5,433.7 268.8,394.8 262.7,393.4" fill="#ba00ba"/><polygon points="300.0,431.0 305.8,428.3 299.8,389.5 293.9,392.1" fill="#e10ae1"/><polygon points="275.1,433.6 281.7,434.1 275.1,395.2 268.4,394.7" fill="#c300c3"/><polygon points="294.0,432.8 300.4,430.8 294.3,391.9 287.7,393.8" fill="#db07db"/><polygon points="281.3,434.1 288.1,433.8 281.7,394.9 274.7,395.2" fill="#cc00cc"/><polygon points="287.7,433.8 294.4,432.7 288.2,393.7 281.2,394.9" fill="#d403d4"/></g><path d="M262.9,393.5 L267.1,394.5 L271.7,395.1 L276.6,395.2 L281.5,394.9 L286.4,394.1 L291.1,393.0 L295.5,391.4 L299.6,389.5 L303.2,387.4 L306.2,384.9 L308.5,382.4 L310.2,379.7 L311.1,376.9 L311.3,374.2 L310.7,371.6 L309.3,369.1 L307.3,366.9 L304.6,364.9 L301.4,363.2 L297.6,361.9 L293.4,360.9 L289.0,360.4 L284.3,360.3 L279.5,360.6 L274.8,361.3 L270.1,362.4 L265.8,363.8 L261.7,365.6 L258.1,367.7 L255.1,370.1 L252.6,372.6 L250.9,375.3 L249.8,378.0 L249.5,380.8 L250.0,383.4 L251.2,386.0 L253.2,388.3 L255.8,390.4 L259.1,392.1Z" fill="#ff1cff"/><g clip-path="url(#cg11)"><polygon points="841.4,380.5 830.5,379.4 835.0,341.2 846.1,342.3" fill="#c000c0"/><polygon points="851.3,382.6 840.6,380.4 845.3,342.2 856.2,344.4" fill="#b900b9"/><polygon points="831.3,379.4 820.4,379.4 824.7,341.2 835.8,341.2" fill="#c800c8"/><polygon points="821.2,379.3 810.6,380.4 814.7,342.2 825.5,341.1" fill="#cf01cf"/><polygon points="860.6,385.6 850.5,382.4 855.4,344.2 865.8,347.3" fill="#b200b2"/><polygon points="811.4,380.3 801.5,382.3 805.4,344.1 815.5,342.0" fill="#d504d5"/><polygon points="869.1,389.5 859.9,385.3 865.0,347.1 874.5,351.1" fill="#ab00ab"/><polygon points="876.6,394.1 868.5,389.1 873.8,350.8 882.1,355.7" fill="#a400a4"/><polygon points="802.2,382.1 793.2,385.2 797.0,347.0 806.1,343.9" fill="#db07db"/><polygon points="793.8,385.0 786.0,389.0 789.6,350.7 797.6,346.7" fill="#e00ae0"/><polygon points="882.8,399.3 876.1,393.7 881.5,355.3 888.4,360.8" fill="#9e009e"/><polygon points="887.5,405.0 882.4,398.8 888.0,360.4 893.3,366.4" fill="#9a009a"/><polygon points="786.5,388.7 780.1,393.5 783.7,355.1 790.2,350.3" fill="#e40be4"/><polygon points="890.6,411.0 887.2,404.5 893.0,366.0 896.4,372.3" fill="#960096"/><polygon points="780.5,393.1 775.7,398.7 779.2,360.2 784.1,354.7" fill="#e60de6"/><polygon points="776.0,398.2 773.0,404.3 776.4,365.8 779.5,359.8" fill="#e80de8"/><polygon points="891.9,417.1 890.4,410.5 896.2,371.9 897.8,378.4" fill="#930093"/><polygon points="891.4,423.2 891.8,416.6 897.8,377.9 897.3,384.4" fill="#920092"/><polygon points="773.1,403.8 772.0,410.3 775.5,371.7 776.6,365.3" fill="#e80de8"/><line x1="796.6" y1="383.9" x2="800.5" y2="345.6" stroke="#f418f4" stroke-width="1.6"/><polygon points="861.1,419.4 861.8,415.5 867.1,376.8 866.4,380.6" fill="#e80de8"/><polygon points="801.9,411.1 802.4,415.0 806.5,376.4 805.9,372.5" fill="#930093"/><polygon points="859.1,422.7 861.2,419.1 866.5,380.4 864.4,383.9" fill="#e70de7"/><polygon points="802.3,414.8 804.2,418.7 808.3,380.0 806.4,376.1" fill="#960096"/><polygon points="855.9,425.7 859.3,422.5 864.6,383.7 861.1,386.9" fill="#e50ce5"/><polygon points="804.0,418.4 807.2,422.1 811.5,383.3 808.2,379.7" fill="#9b009b"/><polygon points="851.6,428.1 856.2,425.5 861.4,386.7 856.8,389.3" fill="#e10ae1"/><polygon points="807.0,421.9 811.4,425.1 815.7,386.3 811.2,383.1" fill="#a100a1"/><polygon points="846.4,429.9 851.9,428.0 857.1,389.1 851.5,391.1" fill="#db07db"/><polygon points="811.1,425.0 816.5,427.7 820.9,388.9 815.4,386.2" fill="#a900a9"/><polygon points="840.6,431.0 846.8,429.8 851.9,391.0 845.5,392.1" fill="#d403d4"/><polygon points="816.1,427.5 822.2,429.6 826.8,390.8 820.5,388.7" fill="#b100b1"/><polygon points="834.4,431.3 841.0,430.9 845.9,392.1 839.2,392.4" fill="#cc00cc"/><polygon points="821.8,429.5 828.4,430.8 833.1,392.0 826.4,390.7" fill="#ba00ba"/><polygon points="828.0,430.8 834.8,431.3 839.6,392.4 832.7,391.9" fill="#c300c3"/></g><path d="M826.6,390.7 L831.3,391.7 L836.1,392.3 L841.0,392.4 L845.7,392.1 L850.2,391.4 L854.4,390.2 L858.1,388.7 L861.3,386.8 L863.8,384.6 L865.6,382.2 L866.7,379.6 L867.1,377.0 L866.7,374.2 L865.5,371.5 L863.7,368.9 L861.2,366.5 L858.1,364.2 L854.5,362.3 L850.4,360.6 L846.1,359.3 L841.5,358.3 L836.8,357.8 L832.0,357.7 L827.4,358.0 L823.0,358.7 L819.0,359.8 L815.3,361.2 L812.1,363.0 L809.6,365.1 L807.6,367.4 L806.4,370.0 L805.9,372.6 L806.2,375.3 L807.2,378.1 L808.9,380.7 L811.3,383.2 L814.4,385.5 L818.0,387.6 L822.1,389.3Z" fill="#ff1cff"/><g clip-path="url(#cg3)"><polygon points="254.0,452.8 242.3,454.7 234.8,415.6 246.8,413.6" fill="#d303d3"/><polygon points="243.2,454.6 231.8,457.7 224.1,418.4 235.7,415.4" fill="#d906d9"/><polygon points="264.9,452.1 253.1,452.9 245.9,413.7 257.9,413.0" fill="#cd00cd"/><polygon points="275.4,452.6 264.0,452.2 257.0,413.0 268.7,413.5" fill="#c500c5"/><polygon points="232.6,457.4 221.9,461.6 214.0,422.3 224.9,418.2" fill="#de09de"/><polygon points="285.4,454.3 274.6,452.6 267.8,413.4 278.9,415.1" fill="#be00be"/><polygon points="222.7,461.3 212.9,466.4 204.8,427.1 214.7,422.0" fill="#e30be3"/><polygon points="294.6,457.0 284.7,454.1 278.1,414.9 288.2,417.8" fill="#b600b6"/><polygon points="213.6,466.0 205.1,472.0 196.8,432.7 205.5,426.7" fill="#e60ce6"/><polygon points="302.5,460.7 293.9,456.7 287.5,417.5 296.3,421.5" fill="#af00af"/><polygon points="205.7,471.6 198.8,478.3 190.2,438.8 197.4,432.2" fill="#e70de7"/><polygon points="309.2,465.4 302.0,460.4 295.7,421.1 303.0,426.1" fill="#a800a8"/><polygon points="199.2,477.7 194.1,484.9 185.4,445.4 190.7,438.3" fill="#e80de8"/><polygon points="314.2,470.8 308.7,465.0 302.6,425.7 308.2,431.5" fill="#a200a2"/><polygon points="194.4,484.4 191.1,491.8 182.3,452.2 185.7,444.9" fill="#e70de7"/><polygon points="191.3,491.3 190.1,498.8 181.3,459.1 182.5,451.7" fill="#e50ce5"/><polygon points="317.6,476.9 313.9,470.4 307.8,431.0 311.6,437.5" fill="#9d009d"/><polygon points="190.1,498.2 191.1,505.6 182.2,465.9 181.3,458.6" fill="#e20ae2"/><polygon points="319.0,483.5 317.4,476.4 311.4,437.0 313.0,444.0" fill="#980098"/><line x1="271.4" y1="452.3" x2="264.6" y2="413.2" stroke="#f418f4" stroke-width="1.6"/><polygon points="287.0,489.3 286.8,485.0 280.1,445.4 280.3,449.7" fill="#e40be4"/><polygon points="222.8,496.5 224.4,500.7 216.2,461.0 214.7,456.9" fill="#9b009b"/><polygon points="285.8,493.5 287.0,489.0 280.3,449.5 279.0,453.9" fill="#e70de7"/><polygon points="224.2,500.4 227.2,504.1 219.1,464.4 216.1,460.7" fill="#a100a1"/><polygon points="283.2,497.6 285.9,493.2 279.2,453.6 276.4,457.9" fill="#e80de8"/><polygon points="227.0,503.9 231.3,507.0 223.3,467.3 218.9,464.2" fill="#a900a9"/><polygon points="279.4,501.4 283.4,497.3 276.6,457.7 272.4,461.7" fill="#e70de7"/><polygon points="231.0,506.9 236.4,509.2 228.5,469.5 222.9,467.1" fill="#b100b1"/><polygon points="274.4,504.7 279.7,501.1 272.7,461.5 267.4,465.0" fill="#e50ce5"/><polygon points="236.1,509.1 242.4,510.6 234.6,470.8 228.1,469.3" fill="#ba00ba"/><polygon points="268.6,507.5 274.8,504.5 267.7,464.8 261.4,467.8" fill="#e10ae1"/><polygon points="242.0,510.5 249.0,511.1 241.3,471.3 234.2,470.8" fill="#c300c3"/><polygon points="262.2,509.6 269.0,507.4 261.8,467.6 254.8,469.8" fill="#db07db"/><polygon points="248.5,511.1 255.8,510.7 248.3,471.0 240.9,471.3" fill="#cc00cc"/><polygon points="255.4,510.8 262.6,509.4 255.2,469.7 247.8,471.0" fill="#d403d4"/></g><path d="M228.3,469.4 L232.8,470.5 L237.7,471.2 L242.8,471.3 L248.1,471.0 L253.3,470.1 L258.4,468.8 L263.2,467.1 L267.5,464.9 L271.4,462.5 L274.7,459.7 L277.3,456.8 L279.1,453.7 L280.1,450.6 L280.4,447.6 L279.8,444.6 L278.5,441.8 L276.4,439.3 L273.6,437.0 L270.2,435.1 L266.2,433.6 L261.8,432.6 L257.1,432.0 L252.1,431.8 L247.0,432.2 L242.0,433.0 L237.0,434.2 L232.3,435.9 L228.0,437.9 L224.1,440.3 L220.8,442.9 L218.1,445.8 L216.1,448.8 L214.9,451.9 L214.5,455.0 L214.9,458.0 L216.1,460.9 L218.1,463.5 L220.9,465.8 L224.3,467.8Z" fill="#ff1cff"/><g clip-path="url(#cg10)"><polygon points="871.4,450.8 859.8,449.3 865.2,410.2 877.1,411.7" fill="#bf00bf"/><polygon points="881.9,453.3 870.6,450.7 876.2,411.6 887.7,414.2" fill="#b800b8"/><polygon points="860.7,449.4 849.1,449.1 854.3,410.0 866.1,410.3" fill="#c700c7"/><polygon points="849.9,449.1 838.7,450.0 843.6,410.9 855.1,410.0" fill="#ce00ce"/><polygon points="891.7,456.9 881.0,453.1 886.9,414.0 897.8,417.7" fill="#b000b0"/><polygon points="839.5,449.9 828.9,452.1 833.6,412.9 844.5,410.8" fill="#d404d4"/><polygon points="900.7,461.4 891.0,456.6 897.0,417.4 907.0,422.1" fill="#a900a9"/><polygon points="908.5,466.7 900.0,461.0 906.3,421.8 915.0,427.4" fill="#a300a3"/><polygon points="829.6,451.9 820.0,455.1 824.6,416.0 834.4,412.7" fill="#da07da"/><polygon points="915.0,472.6 908.0,466.2 914.4,426.9 921.7,433.3" fill="#9d009d"/><polygon points="820.6,454.9 812.2,459.2 816.6,420.0 825.2,415.7" fill="#df09df"/><polygon points="919.9,479.1 914.5,472.1 921.2,432.8 926.7,439.7" fill="#990099"/><polygon points="812.8,458.9 805.8,464.2 810.1,424.9 817.2,419.7" fill="#e30be3"/><polygon points="923.0,485.9 919.5,478.6 926.3,439.2 929.9,446.4" fill="#950095"/><polygon points="806.3,463.7 801.0,469.8 805.2,430.5 810.6,424.5" fill="#e60de6"/><polygon points="924.2,492.8 922.8,485.4 929.7,445.9 931.2,453.3" fill="#930093"/><polygon points="801.3,469.4 797.9,476.1 802.1,436.7 805.6,430.0" fill="#e80de8"/><polygon points="923.5,499.7 924.2,492.3 931.1,452.7 930.5,460.1" fill="#920092"/><polygon points="798.1,475.6 796.7,482.8 800.9,443.3 802.3,436.2" fill="#e80de8"/><line x1="845.5" y1="449.3" x2="850.6" y2="410.2" stroke="#f418f4" stroke-width="1.6"/><polygon points="828.4,484.9 829.0,489.3 833.9,449.8 833.3,445.4" fill="#930093"/><polygon points="889.5,498.0 891.6,493.9 897.9,454.4 895.7,458.4" fill="#e70de7"/><polygon points="828.9,489.1 831.0,493.4 836.0,453.9 833.9,449.5" fill="#960096"/><polygon points="886.1,501.3 889.6,497.7 895.9,458.1 892.4,461.7" fill="#e50ce5"/><polygon points="830.9,493.2 834.4,497.3 839.4,457.7 835.8,453.6" fill="#9b009b"/><polygon points="881.7,504.1 886.4,501.1 892.6,461.5 887.8,464.4" fill="#e10ae1"/><polygon points="834.1,497.0 838.8,500.7 844.0,461.1 839.2,457.4" fill="#a100a1"/><polygon points="876.2,506.1 882.0,503.9 888.1,464.3 882.2,466.4" fill="#db07db"/><polygon points="838.5,500.5 844.3,503.6 849.6,463.9 843.7,460.9" fill="#a900a9"/><polygon points="870.0,507.3 876.6,506.0 882.6,466.3 875.9,467.6" fill="#d403d4"/><polygon points="843.9,503.4 850.4,505.8 855.9,466.1 849.2,463.8" fill="#b100b1"/><polygon points="863.4,507.7 870.4,507.3 876.3,467.6 869.1,468.0" fill="#cc00cc"/><polygon points="850.0,505.7 857.1,507.2 862.7,467.5 855.5,466.0" fill="#ba00ba"/><polygon points="856.6,507.1 863.8,507.7 869.6,468.0 862.2,467.4" fill="#c300c3"/></g><path d="M855.7,466.0 L860.7,467.2 L865.9,467.8 L871.1,468.0 L876.1,467.6 L880.9,466.8 L885.3,465.5 L889.2,463.7 L892.5,461.6 L895.1,459.1 L897.0,456.4 L898.1,453.5 L898.4,450.5 L897.9,447.4 L896.6,444.3 L894.6,441.4 L891.8,438.6 L888.5,436.1 L884.6,433.9 L880.3,432.0 L875.6,430.5 L870.7,429.4 L865.6,428.8 L860.6,428.7 L855.7,429.0 L851.1,429.8 L846.8,431.1 L842.9,432.7 L839.6,434.7 L837.0,437.1 L835.0,439.7 L833.7,442.6 L833.3,445.6 L833.6,448.6 L834.7,451.7 L836.7,454.7 L839.3,457.6 L842.6,460.2 L846.5,462.5 L850.9,464.5Z" fill="#ff1cff"/><g clip-path="url(#cg4)"><polygon points="274.4,528.2 262.0,530.4 254.5,490.4 267.2,488.3" fill="#d303d3"/><polygon points="262.9,530.1 250.9,533.6 243.1,493.6 255.5,490.2" fill="#d906d9"/><polygon points="285.9,527.5 273.5,528.3 266.3,488.4 279.0,487.6" fill="#cc00cc"/><polygon points="297.1,528.1 285.0,527.5 278.1,487.6 290.4,488.2" fill="#c500c5"/><polygon points="251.8,533.3 240.4,538.0 232.4,498.0 244.0,493.3" fill="#de09de"/><polygon points="241.3,537.6 231.0,543.4 222.7,503.4 233.3,497.6" fill="#e30be3"/><polygon points="307.8,530.0 296.3,528.0 289.5,488.1 301.3,490.0" fill="#be00be"/><polygon points="231.7,543.0 222.8,549.7 214.3,509.6 223.4,502.9" fill="#e60ce6"/><polygon points="317.5,533.1 306.9,529.8 300.4,489.8 311.2,493.1" fill="#b600b6"/><polygon points="326.0,537.3 316.7,532.8 310.4,492.8 319.9,497.3" fill="#af00af"/><polygon points="223.4,549.2 216.0,556.7 207.4,516.6 214.9,509.1" fill="#e70de7"/><polygon points="333.1,542.6 325.3,536.9 319.2,496.9 327.1,502.5" fill="#a800a8"/><polygon points="216.5,556.1 211.1,564.2 202.2,524.0 207.8,516.0" fill="#e80de8"/><polygon points="338.5,548.7 332.5,542.1 326.6,502.1 332.6,508.6" fill="#a200a2"/><polygon points="211.4,563.6 208.0,572.0 199.0,531.8 202.6,523.4" fill="#e70de7"/><polygon points="342.1,555.6 338.1,548.2 332.2,508.1 336.3,515.5" fill="#9c009c"/><polygon points="208.2,571.4 207.0,579.9 197.9,539.6 199.2,531.1" fill="#e50ce5"/><polygon points="343.7,563.1 341.9,555.1 336.0,514.9 337.9,522.9" fill="#980098"/><polygon points="207.0,579.3 208.0,587.6 199.0,547.2 197.9,538.9" fill="#e20ae2"/><line x1="265.0" y1="529.7" x2="257.6" y2="489.7" stroke="#f418f4" stroke-width="1.6"/><polygon points="309.8,569.4 309.5,564.5 302.8,524.3 303.2,529.1" fill="#e40be4"/><polygon points="241.7,577.6 243.4,582.3 235.2,541.9 233.5,537.2" fill="#9b009b"/><polygon points="308.6,574.1 309.8,569.1 303.2,528.8 301.9,533.8" fill="#e70de7"/><polygon points="243.2,582.0 246.5,586.2 238.3,545.8 235.0,541.6" fill="#a100a1"/><polygon points="305.9,578.7 308.7,573.8 302.0,533.5 299.2,538.4" fill="#e80de8"/><polygon points="246.2,585.9 250.9,589.5 242.8,549.0 238.0,545.5" fill="#a900a9"/><polygon points="301.9,583.0 306.1,578.4 299.4,538.1 295.0,542.7" fill="#e70de7"/><polygon points="250.5,589.3 256.4,591.9 248.4,551.5 242.4,548.8" fill="#b100b1"/><polygon points="296.7,586.9 302.2,582.8 295.3,542.4 289.7,546.5" fill="#e50ce5"/><polygon points="256.0,591.8 262.8,593.5 254.9,553.1 248.0,551.4" fill="#ba00ba"/><polygon points="290.6,590.0 297.1,586.6 290.1,546.2 283.4,549.6" fill="#e10ae1"/><polygon points="262.3,593.4 269.8,594.1 262.1,553.6 254.5,553.0" fill="#c300c3"/><polygon points="283.7,592.3 291.0,589.8 283.8,549.4 276.4,551.9" fill="#db07db"/><polygon points="269.3,594.1 277.0,593.6 269.5,553.2 261.6,553.6" fill="#cc00cc"/><polygon points="276.5,593.7 284.2,592.2 276.9,551.7 269.0,553.2" fill="#d403d4"/></g><path d="M248.2,551.4 L253.0,552.7 L258.2,553.4 L263.7,553.6 L269.3,553.2 L274.8,552.2 L280.2,550.8 L285.3,548.8 L289.9,546.3 L294.0,543.5 L297.4,540.4 L300.1,537.1 L302.0,533.6 L303.0,530.1 L303.2,526.7 L302.6,523.3 L301.1,520.1 L298.8,517.3 L295.8,514.7 L292.1,512.6 L287.9,510.9 L283.2,509.7 L278.1,509.0 L272.9,508.9 L267.5,509.2 L262.1,510.1 L256.9,511.5 L251.9,513.4 L247.3,515.7 L243.2,518.4 L239.7,521.4 L236.9,524.7 L234.9,528.1 L233.6,531.6 L233.3,535.1 L233.7,538.5 L235.1,541.7 L237.3,544.7 L240.2,547.4 L243.9,549.6Z" fill="#ff1cff"/><g clip-path="url(#cg9)"><polygon points="848.0,526.3 835.7,524.7 840.9,484.8 853.5,486.4" fill="#c000c0"/><polygon points="859.1,529.0 847.1,526.1 852.6,486.2 864.8,489.1" fill="#b800b8"/><polygon points="836.6,524.7 824.4,524.5 829.3,484.6 841.9,484.9" fill="#c700c7"/><polygon points="825.3,524.5 813.3,525.6 818.0,485.7 830.2,484.6" fill="#ce01ce"/><polygon points="869.5,533.0 858.2,528.8 864.0,488.9 875.5,493.0" fill="#b100b1"/><polygon points="879.0,537.9 868.7,532.6 874.7,492.7 885.3,498.0" fill="#aa00aa"/><polygon points="814.2,525.5 802.9,528.0 807.4,488.1 818.9,485.6" fill="#d504d5"/><polygon points="887.4,543.9 878.3,537.5 884.5,497.5 893.8,503.8" fill="#a300a3"/><polygon points="803.7,527.7 793.5,531.5 797.8,491.6 808.2,487.8" fill="#db07db"/><polygon points="794.2,531.2 785.2,536.2 789.3,496.2 798.5,491.3" fill="#e009e0"/><polygon points="894.2,550.6 886.7,543.4 893.2,503.3 900.8,510.5" fill="#9e009e"/><polygon points="899.4,557.8 893.7,550.0 900.3,509.9 906.2,517.7" fill="#990099"/><polygon points="785.8,535.8 778.4,541.8 782.4,501.8 790.0,495.8" fill="#e30be3"/><polygon points="778.9,541.3 773.2,548.3 777.1,508.2 782.9,501.3" fill="#e60de6"/><polygon points="902.7,565.5 899.0,557.2 905.8,517.1 909.6,525.3" fill="#960096"/><polygon points="773.6,547.7 769.9,555.4 773.8,515.2 777.5,507.6" fill="#e80de8"/><polygon points="904.0,573.3 902.5,564.9 909.4,524.7 911.0,533.1" fill="#930093"/><polygon points="903.2,581.1 904.0,572.7 910.9,532.5 910.2,540.8" fill="#920092"/><polygon points="770.1,554.8 768.6,562.9 772.4,522.7 774.0,514.6" fill="#e80de8"/><line x1="848.5" y1="526.4" x2="854.0" y2="486.5" stroke="#f418f4" stroke-width="1.6"/><polygon points="802.3,564.9 802.9,569.9 807.5,529.6 806.9,524.7" fill="#930093"/><polygon points="867.0,579.6 869.3,575.0 875.5,534.8 873.1,539.3" fill="#e70de7"/><polygon points="802.8,569.6 804.9,574.5 809.6,534.2 807.4,529.3" fill="#960096"/><polygon points="863.4,583.4 867.2,579.4 873.3,539.1 869.5,543.1" fill="#e50ce5"/><polygon points="804.7,574.2 808.4,578.9 813.2,538.5 809.4,533.9" fill="#9b009b"/><polygon points="858.5,586.5 863.7,583.2 869.8,542.9 864.5,546.2" fill="#e10ae1"/><polygon points="808.1,578.6 813.1,582.8 818.0,542.4 812.9,538.3" fill="#a100a1"/><polygon points="852.7,588.8 858.9,586.4 864.9,546.0 858.6,548.5" fill="#db07db"/><polygon points="812.7,582.5 818.8,586.0 823.9,545.7 817.6,542.2" fill="#a900a9"/><polygon points="846.1,590.2 853.1,588.7 859.0,548.3 851.8,549.8" fill="#d403d4"/><polygon points="818.4,585.8 825.3,588.5 830.5,548.1 823.4,545.5" fill="#b100b1"/><polygon points="839.0,590.6 846.6,590.2 852.3,549.8 844.6,550.2" fill="#cc00cc"/><polygon points="824.9,588.3 832.3,590.0 837.7,549.6 830.1,548.0" fill="#ba00ba"/><polygon points="831.8,590.0 839.5,590.6 845.1,550.2 837.2,549.6" fill="#c300c3"/></g><path d="M830.3,548.0 L835.7,549.3 L841.2,550.0 L846.7,550.2 L852.0,549.8 L857.2,548.8 L861.9,547.4 L866.1,545.4 L869.6,543.0 L872.5,540.2 L874.5,537.1 L875.7,533.8 L876.1,530.4 L875.7,526.9 L874.3,523.4 L872.2,520.1 L869.4,516.9 L865.9,514.1 L861.8,511.5 L857.2,509.4 L852.2,507.7 L847.0,506.6 L841.7,505.9 L836.4,505.7 L831.2,506.1 L826.2,507.0 L821.6,508.4 L817.5,510.2 L813.9,512.5 L811.0,515.2 L808.8,518.2 L807.4,521.4 L806.9,524.8 L807.2,528.3 L808.3,531.8 L810.3,535.2 L813.0,538.4 L816.5,541.4 L820.6,544.0 L825.2,546.3Z" fill="#ff1cff"/><g clip-path="url(#cg5)"><polygon points="354.5,593.1 341.5,595.0 335.5,554.5 348.8,552.7" fill="#d102d1"/><polygon points="366.5,592.8 353.5,593.2 347.8,552.7 361.1,552.4" fill="#ca00ca"/><polygon points="342.5,594.8 329.9,598.2 323.6,557.7 336.5,554.3" fill="#d705d7"/><polygon points="378.1,593.9 365.5,592.8 360.1,552.3 373.0,553.5" fill="#c300c3"/><polygon points="330.8,597.9 318.9,602.6 312.3,562.1 324.5,557.4" fill="#dd08dd"/><polygon points="389.1,596.4 377.2,593.8 372.1,553.3 384.2,555.9" fill="#bb00bb"/><polygon points="319.7,602.2 308.9,608.3 302.0,567.7 313.2,561.7" fill="#e10ae1"/><polygon points="399.2,600.2 388.3,596.2 383.4,555.7 394.5,559.7" fill="#b400b4"/><polygon points="309.6,607.8 300.1,614.9 293.0,574.3 302.8,567.2" fill="#e50ce5"/><polygon points="300.8,614.3 292.9,622.4 285.6,581.8 293.7,573.8" fill="#e70de7"/><polygon points="407.9,605.3 398.4,599.9 393.7,559.4 403.4,564.8" fill="#ad00ad"/><polygon points="415.2,611.4 407.3,604.8 402.8,564.3 410.8,570.9" fill="#a600a6"/><polygon points="293.5,621.8 287.5,630.5 280.1,589.9 286.2,581.2" fill="#e80de8"/><polygon points="287.9,629.9 284.1,639.1 276.5,598.4 280.4,589.2" fill="#e80de8"/><polygon points="420.7,618.5 414.7,610.9 410.3,570.4 416.5,577.9" fill="#a000a0"/><polygon points="424.3,626.4 420.3,617.9 416.1,577.3 420.1,585.7" fill="#9b009b"/><polygon points="284.3,638.4 282.8,647.8 275.1,607.0 276.7,597.7" fill="#e60ce6"/><polygon points="425.8,634.7 424.1,625.7 419.9,585.1 421.6,594.1" fill="#970097"/><polygon points="282.8,647.1 283.6,656.4 275.9,615.6 275.1,606.3" fill="#e30be3"/><line x1="314.1" y1="605.1" x2="307.4" y2="564.6" stroke="#f418f4" stroke-width="1.6"/><polygon points="319.2,648.0 321.2,653.2 314.5,612.4 312.4,607.2" fill="#9b009b"/><polygon points="389.3,644.2 390.3,638.6 385.3,597.9 384.2,603.4" fill="#e70de7"/><polygon points="321.1,652.9 324.7,657.5 318.0,616.7 314.3,612.1" fill="#a100a1"/><polygon points="386.8,649.3 389.4,643.8 384.3,603.1 381.6,608.5" fill="#e80de8"/><polygon points="324.4,657.3 329.5,661.2 322.9,620.3 317.7,616.5" fill="#a900a9"/><polygon points="382.8,654.1 387.0,648.9 381.8,608.2 377.6,613.3" fill="#e70de7"/><polygon points="329.2,660.9 335.5,663.9 329.0,623.1 322.6,620.1" fill="#b100b1"/><polygon points="377.6,658.3 383.1,653.8 377.9,613.0 372.2,617.5" fill="#e50ce5"/><polygon points="335.1,663.8 342.3,665.6 336.0,624.8 328.6,622.9" fill="#ba00ba"/><polygon points="371.3,661.7 378.0,658.0 372.6,617.2 365.8,620.9" fill="#e10ae1"/><polygon points="341.9,665.6 349.7,666.3 343.6,625.4 335.5,624.7" fill="#c300c3"/><polygon points="364.3,664.3 371.8,661.5 366.2,620.7 358.5,623.5" fill="#db07db"/><polygon points="349.2,666.3 357.3,665.8 351.4,624.9 343.1,625.4" fill="#cc00cc"/><polygon points="356.8,665.8 364.8,664.2 359.0,623.3 350.9,625.0" fill="#d403d4"/></g><path d="M328.8,623.0 L334.0,624.4 L339.5,625.2 L345.3,625.4 L351.1,625.0 L356.9,623.9 L362.5,622.2 L367.7,620.0 L372.4,617.3 L376.5,614.2 L379.9,610.8 L382.5,607.1 L384.3,603.3 L385.2,599.4 L385.1,595.5 L384.2,591.8 L382.4,588.3 L379.9,585.1 L376.5,582.3 L372.5,580.0 L368.0,578.1 L363.0,576.8 L357.6,576.0 L352.0,575.8 L346.4,576.2 L340.8,577.2 L335.4,578.8 L330.3,580.9 L325.6,583.4 L321.5,586.4 L318.0,589.7 L315.2,593.3 L313.3,597.1 L312.2,601.0 L312.0,604.9 L312.8,608.7 L314.4,612.3 L316.9,615.6 L320.2,618.5 L324.2,621.0Z" fill="#ff1cff"/><g clip-path="url(#cg8)"><polygon points="765.6,591.7 752.7,590.4 756.2,550.0 769.4,551.2" fill="#c200c2"/><polygon points="777.2,594.2 764.6,591.5 768.4,551.1 781.3,553.8" fill="#bb00bb"/><polygon points="753.6,590.5 740.8,590.8 744.1,550.4 757.2,550.1" fill="#ca00ca"/><polygon points="788.2,598.1 776.3,594.0 780.4,553.5 792.6,557.7" fill="#b300b3"/><polygon points="741.7,590.7 729.3,592.5 732.3,552.1 745.0,550.3" fill="#d102d1"/><polygon points="798.3,603.2 787.4,597.7 791.7,557.3 803.0,562.7" fill="#ac00ac"/><polygon points="730.2,592.3 718.5,595.6 721.3,555.2 733.2,551.9" fill="#d705d7"/><polygon points="807.2,609.4 797.6,602.7 802.2,562.3 812.1,568.9" fill="#a600a6"/><polygon points="719.3,595.3 708.7,600.0 711.3,559.5 722.1,554.9" fill="#dc08dc"/><polygon points="814.6,616.5 806.5,608.9 811.4,568.3 819.7,575.9" fill="#a000a0"/><polygon points="709.5,599.6 700.2,605.5 702.6,565.0 712.0,559.1" fill="#e10ae1"/><polygon points="820.3,624.3 814.1,615.9 819.1,575.3 825.5,583.7" fill="#9b009b"/><polygon points="700.9,605.0 693.3,612.1 695.5,571.5 703.2,564.5" fill="#e50ce5"/><polygon points="824.0,632.7 819.9,623.7 825.1,583.1 829.4,592.0" fill="#970097"/><polygon points="693.8,611.5 688.1,619.5 690.2,578.9 696.0,571.0" fill="#e70de7"/><polygon points="825.7,641.3 823.8,632.0 829.2,591.4 831.1,600.6" fill="#940094"/><polygon points="688.5,618.9 684.9,627.6 686.9,586.9 690.6,578.3" fill="#e80de8"/><polygon points="825.2,650.0 825.6,640.6 831.1,599.9 830.7,609.2" fill="#920092"/><polygon points="685.1,626.9 683.8,636.1 685.8,595.4 687.1,586.3" fill="#e80de8"/><line x1="796.4" y1="602.1" x2="801.0" y2="561.6" stroke="#f418f4" stroke-width="1.6"/><polygon points="789.0,646.7 790.1,641.3 794.7,600.6 793.6,606.0" fill="#e80de8"/><polygon points="719.2,635.1 719.5,640.6 722.4,599.9 722.1,594.4" fill="#930093"/><polygon points="786.4,651.5 789.1,646.4 793.7,605.6 790.9,610.7" fill="#e70de7"/><polygon points="719.5,640.3 721.4,645.8 724.3,605.0 722.4,599.6" fill="#960096"/><polygon points="782.4,655.7 786.6,651.2 791.2,610.4 786.8,614.9" fill="#e50ce5"/><polygon points="721.2,645.4 724.8,650.6 727.8,609.8 724.2,604.7" fill="#9b009b"/><polygon points="777.1,659.1 782.7,655.4 787.2,614.6 781.4,618.3" fill="#e10ae1"/><polygon points="724.5,650.3 729.4,654.9 732.6,614.2 727.5,609.5" fill="#a100a1"/><polygon points="770.8,661.7 777.5,658.9 781.8,618.1 775.0,620.9" fill="#db07db"/><polygon points="729.1,654.7 735.3,658.5 738.6,617.7 732.2,613.9" fill="#a900a9"/><polygon points="763.8,663.2 771.3,661.5 775.4,620.7 767.8,622.4" fill="#d403d4"/><polygon points="734.8,658.3 742.0,661.3 745.5,620.5 738.1,617.5" fill="#b100b1"/><polygon points="756.3,663.6 764.2,663.1 768.3,622.3 760.1,622.8" fill="#cc00cc"/><polygon points="741.5,661.1 749.3,663.0 752.9,622.2 745.0,620.3" fill="#ba00ba"/><polygon points="748.8,662.9 756.8,663.6 760.7,622.8 752.4,622.1" fill="#c300c3"/></g><path d="M745.2,620.4 L750.8,621.8 L756.5,622.6 L762.3,622.8 L768.0,622.4 L773.5,621.3 L778.5,619.6 L783.1,617.4 L787.0,614.8 L790.2,611.7 L792.6,608.2 L794.1,604.6 L794.7,600.7 L794.4,596.9 L793.3,593.0 L791.3,589.3 L788.5,585.9 L784.9,582.7 L780.8,579.9 L776.1,577.5 L771.0,575.7 L765.6,574.3 L760.0,573.6 L754.4,573.4 L748.9,573.8 L743.7,574.8 L738.7,576.4 L734.2,578.4 L730.3,581.0 L727.1,583.9 L724.6,587.3 L722.9,590.8 L722.1,594.6 L722.2,598.5 L723.1,602.3 L725.0,606.1 L727.6,609.7 L731.1,613.0 L735.3,615.9 L740.0,618.4Z" fill="#ff1cff"/><g clip-path="url(#cg6)"><polygon points="484.3,630.8 471.0,631.8 468.0,591.1 481.6,590.1" fill="#cd00cd"/><polygon points="496.5,631.4 483.3,630.8 480.5,590.1 494.0,590.7" fill="#c500c5"/><polygon points="472.0,631.6 459.0,634.2 455.6,593.6 469.0,591.0" fill="#d303d3"/><polygon points="508.3,633.5 495.5,631.3 493.1,590.6 506.1,592.8" fill="#be00be"/><polygon points="460.0,634.0 447.6,638.1 443.9,597.4 456.6,593.3" fill="#d906d9"/><polygon points="519.3,637.0 507.4,633.3 505.2,592.6 517.4,596.3" fill="#b700b7"/><polygon points="448.5,637.8 437.1,643.3 433.2,602.6 444.8,597.1" fill="#df09df"/><polygon points="437.9,642.8 427.8,649.7 423.6,608.9 434.0,602.1" fill="#e30be3"/><polygon points="529.2,641.9 518.5,636.7 516.5,596.0 527.5,601.2" fill="#af00af"/><polygon points="428.5,649.1 420.0,657.1 415.6,616.3 424.3,608.4" fill="#e60ce6"/><polygon points="537.8,648.0 528.5,641.4 526.8,600.7 536.3,607.2" fill="#a800a8"/><polygon points="420.6,656.4 414.0,665.3 409.4,624.4 416.2,615.6" fill="#e80de8"/><polygon points="544.8,655.1 537.2,647.4 535.7,606.7 543.5,614.3" fill="#a200a2"/><polygon points="414.4,664.6 409.9,674.1 405.2,633.2 409.8,623.8" fill="#e80de8"/><polygon points="550.0,663.1 544.3,654.5 543.0,613.7 548.8,622.3" fill="#9d009d"/><polygon points="553.1,671.8 549.6,662.5 548.4,621.6 552.0,630.9" fill="#980098"/><polygon points="410.1,673.3 407.9,683.2 403.2,642.3 405.5,632.5" fill="#e70de7"/><polygon points="554.1,680.9 552.9,671.1 551.8,630.2 553.0,640.0" fill="#950095"/><polygon points="408.0,682.5 408.2,692.4 403.4,651.5 403.3,641.6" fill="#e50ce5"/><line x1="416.8" y1="661.0" x2="412.4" y2="620.1" stroke="#f418f4" stroke-width="1.6"/><polygon points="444.5,683.7 445.4,689.5 441.6,648.6 440.6,642.8" fill="#960096"/><polygon points="517.1,685.1 517.6,679.3 515.5,638.4 515.0,644.2" fill="#e70de7"/><polygon points="445.3,689.2 447.9,694.7 444.1,653.7 441.4,648.3" fill="#9b009b"/><polygon points="514.9,690.5 517.1,684.8 515.1,643.9 512.8,649.6" fill="#e80de8"/><polygon points="447.7,694.4 451.9,699.3 448.1,658.3 443.9,653.4" fill="#a100a1"/><polygon points="511.3,695.6 515.1,690.2 513.0,649.3 509.1,654.6" fill="#e70de7"/><polygon points="451.6,699.0 457.2,703.1 453.6,662.1 447.8,658.0" fill="#a900a9"/><polygon points="506.3,700.1 511.6,695.3 509.4,654.3 504.0,659.1" fill="#e50ce5"/><polygon points="456.8,702.9 463.5,706.0 460.1,665.0 453.2,661.9" fill="#b100b1"/><polygon points="500.2,703.7 506.7,699.8 504.4,658.8 497.7,662.8" fill="#e10ae1"/><polygon points="463.1,705.9 470.7,707.9 467.5,666.9 459.6,664.9" fill="#ba00ba"/><polygon points="493.2,706.4 500.6,703.5 498.1,662.5 490.5,665.5" fill="#db07db"/><polygon points="470.2,707.8 478.4,708.5 475.3,667.5 466.9,666.8" fill="#c300c3"/><polygon points="485.6,708.1 493.7,706.3 491.0,665.3 482.7,667.1" fill="#d403d4"/><polygon points="477.8,708.5 486.1,708.0 483.3,667.0 474.8,667.5" fill="#cc00cc"/></g><path d="M459.9,665.0 L465.3,666.5 L471.1,667.3 L477.0,667.5 L483.0,667.0 L488.9,665.9 L494.4,664.2 L499.6,661.8 L504.2,659.0 L508.1,655.7 L511.3,652.0 L513.6,648.1 L515.1,644.0 L515.6,639.9 L515.2,635.8 L513.9,631.9 L511.7,628.2 L508.8,624.8 L505.1,621.9 L500.7,619.4 L495.8,617.4 L490.6,616.0 L485.0,615.2 L479.2,615.0 L473.5,615.4 L467.8,616.5 L462.4,618.1 L457.3,620.3 L452.8,623.0 L448.8,626.2 L445.5,629.7 L443.1,633.5 L441.4,637.5 L440.7,641.6 L440.9,645.7 L442.0,649.8 L444.0,653.6 L446.9,657.1 L450.5,660.2 L454.9,662.9Z" fill="#ff1cff"/><g clip-path="url(#cg7)"><polygon points="634.4,630.2 621.1,630.0 621.6,589.3 635.2,589.6" fill="#c700c7"/><polygon points="646.4,632.0 633.4,630.2 634.2,589.5 647.5,591.3" fill="#c000c0"/><polygon points="622.1,630.0 609.0,631.3 609.2,590.7 622.6,589.3" fill="#ce01ce"/><polygon points="610.0,631.2 597.4,634.1 597.3,593.4 610.2,590.5" fill="#d504d5"/><polygon points="657.9,635.2 645.5,631.8 646.6,591.1 659.3,594.5" fill="#b800b8"/><polygon points="668.6,639.8 657.0,634.9 658.4,594.2 670.3,599.1" fill="#b100b1"/><polygon points="598.3,633.8 586.5,638.3 586.2,597.6 598.2,593.2" fill="#db07db"/><polygon points="587.4,637.9 576.8,643.7 576.3,603.0 587.1,597.2" fill="#e009e0"/><polygon points="678.1,645.6 667.8,639.4 669.4,598.7 680.0,604.9" fill="#aa00aa"/><polygon points="686.1,652.5 677.4,645.1 679.3,604.3 688.2,611.7" fill="#a400a4"/><polygon points="577.6,643.3 568.5,650.3 567.8,609.6 577.0,602.5" fill="#e40be4"/><polygon points="692.5,660.3 685.6,651.9 687.6,611.1 694.8,619.5" fill="#9e009e"/><polygon points="569.1,649.8 561.9,657.9 561.0,617.1 568.4,609.0" fill="#e60de6"/><polygon points="696.9,668.9 692.1,659.7 694.3,618.9 699.3,628.0" fill="#990099"/><polygon points="562.4,657.3 557.1,666.3 556.1,625.4 561.4,616.5" fill="#e80de8"/><polygon points="699.3,677.8 696.7,668.2 699.0,627.3 701.8,637.0" fill="#960096"/><polygon points="557.4,665.6 554.4,675.2 553.3,634.3 556.4,624.8" fill="#e80de8"/><polygon points="699.5,687.0 699.2,677.1 701.7,636.2 702.0,646.1" fill="#930093"/><polygon points="554.5,674.4 553.8,684.3 552.7,643.4 553.4,633.6" fill="#e70de7"/><line x1="691.7" y1="659.2" x2="694.0" y2="618.4" stroke="#f418f4" stroke-width="1.6"/><polygon points="661.4,689.6 663.0,683.8 664.6,642.9 662.9,648.6" fill="#e80de8"/><polygon points="590.3,682.8 591.8,688.6 591.6,647.7 590.1,641.9" fill="#960096"/><polygon points="658.3,694.6 661.6,689.2 663.1,648.3 659.7,653.7" fill="#e70de7"/><polygon points="591.7,688.2 594.8,693.7 594.7,652.8 591.5,647.3" fill="#9b009b"/><polygon points="653.7,699.1 658.5,694.3 660.0,653.4 655.1,658.1" fill="#e50ce5"/><polygon points="594.6,693.4 599.3,698.3 599.2,657.3 594.5,652.4" fill="#a100a1"/><polygon points="648.0,702.7 654.1,698.8 655.5,657.8 649.2,661.8" fill="#e10ae1"/><polygon points="598.9,698.0 604.9,702.1 605.0,661.2 598.9,657.1" fill="#a900a9"/><polygon points="641.3,705.5 648.4,702.5 649.6,661.6 642.3,664.5" fill="#db07db"/><polygon points="604.5,701.9 611.6,705.0 611.9,664.1 604.6,660.9" fill="#b100b1"/><polygon points="633.9,707.1 641.7,705.3 642.8,664.3 634.7,666.1" fill="#d403d4"/><polygon points="611.1,704.9 618.9,706.9 619.4,665.9 611.4,663.9" fill="#ba00ba"/><polygon points="626.1,707.5 634.4,707.0 635.2,666.0 626.8,666.5" fill="#cc00cc"/><polygon points="618.4,706.8 626.6,707.5 627.3,666.5 618.9,665.8" fill="#c300c3"/></g><path d="M611.6,664.0 L617.2,665.5 L623.1,666.3 L629.1,666.5 L635.0,666.1 L640.7,664.9 L646.1,663.2 L651.0,660.8 L655.3,658.0 L658.9,654.7 L661.6,651.1 L663.6,647.1 L664.6,643.1 L664.7,639.0 L663.9,634.9 L662.1,631.0 L659.6,627.3 L656.3,623.9 L652.3,620.9 L647.7,618.4 L642.6,616.5 L637.2,615.1 L631.5,614.3 L625.8,614.1 L620.0,614.5 L614.5,615.6 L609.3,617.2 L604.4,619.4 L600.2,622.1 L596.5,625.3 L593.6,628.8 L591.6,632.6 L590.3,636.6 L590.0,640.7 L590.6,644.8 L592.2,648.8 L594.6,652.6 L597.8,656.1 L601.8,659.2 L606.5,661.9Z" fill="#ff1cff"/></g><g shape-rendering="crispEdges"><polygon points="181.0,397.5 202.3,428.0 191.7,437.9 184.1,448.6 181.0,459.2 182.5,468.4 190.2,479.0 156.6,493.5 154.4,486.6 86.6,464.1 155.1,466.1 113.2,440.2 164.3,425.7" fill="#ff1a1a"/><polygon points="109.0,602.3 167.7,544.4 196.6,543.6 202.7,554.3 211.9,564.9 227.1,573.3 245.4,577.6 222.5,609.9 211.1,608.1 147.9,616.3 178.4,565.7" fill="#ff1a1a"/><polygon points="208.8,625.1 216.4,626.6 250.0,665.5 221.0,641.9" fill="#ff1a1a"/><polygon points="219.5,640.4 243.9,661.7 224.1,654.1" fill="#d80f0f"/><polygon points="211.1,608.4 218.7,625.1 213.4,617.5" fill="#b01010"/><polygon points="585.4,685.9 633.6,696.6 658.6,710.9 615.7,718.9 565.7,765.4 577.3,721.6 531.8,721.6" fill="#ff1a1a"/><polygon points="658.6,710.9 663.0,712.7 663.0,724.3 657.7,725.2" fill="#d80f0f"/><polygon points="498.8,752.0 516.6,750.7 508.6,759.1 502.3,758.2" fill="#ff1a1a"/><polygon points="752.9,650.0 834.3,648.6 811.4,663.6 855.7,716.4 784.3,675.0 735.0,693.6" fill="#ff1a1a"/><polygon points="735.0,693.6 758.6,685.7 758.6,697.9 734.3,706.4" fill="#d80f0f"/><polygon points="692.1,670.0 734.3,694.0 733.6,706.4 677.4,707.9 680.7,680.7" fill="#26ff1e"/><polygon points="678.3,704.6 734.3,694.3 733.6,706.4 677.4,707.9" fill="#1fd81a"/><polygon points="665.7,690.0 675.7,707.1 675.0,719.3 669.3,707.1" fill="#96009a"/><polygon points="653.6,738.6 711.4,730.0 766.4,708.3 767.1,711.4 754.3,717.9 754.3,728.6 731.4,738.6 720.0,732.9 672.9,750.0 655.7,755.7" fill="#ff1a1a"/><polygon points="654.3,743.1 711.4,730.6 720.0,733.1 672.9,750.0 655.7,755.7" fill="#d80f0f"/><polygon points="731.4,732.1 754.3,717.9 754.3,728.6 731.4,738.6" fill="#d80f0f"/><polygon points="711.4,730.9 731.4,738.6 700.0,745.7 682.9,746.4" fill="#cc00cc"/><polygon points="640.0,700.0 662.9,711.4 657.9,713.1 640.0,707.1" fill="#ff1a1a"/><polygon points="657.9,712.9 662.9,711.4 662.9,724.3 657.9,725.7" fill="#d80f0f"/><g clip-path="url(#cTip7)" stroke="#4f9aea" stroke-width="1"><line x1="1109.5" y1="311" x2="851" y2="951"/><line x1="1098.6" y1="351" x2="865" y2="950"/></g><line x1="561.5" y1="233" x2="561.5" y2="256" stroke="#a6c4ff" stroke-width="1"/><line x1="815.6" y1="634.3" x2="834.7" y2="649.6" stroke="#a6b8ff" stroke-width="1"/></g></svg><div style="left:1172px;top:101px;width:1px;height:856px;background:#898c95"></div><div style="left:1172px;top:122px;width:505px;height:1px;background:#898c95"></div><div style="left:1676px;top:122px;width:1px;height:835px;background:#898c95"></div><div style="left:1172px;top:956px;width:505px;height:1px;background:#898c95"></div><div style="left:1679px;top:22px;width:1px;height:987px;background:#7a8597"></div><div style="left:1172px;top:101px;width:127px;height:22px;background:#fff;border:1px solid #898c95;border-bottom:none"></div><span id="t21" class="t " style="left:1180px;top:103.5px;height:15px;line-height:15px;font-size:11px;color:#000;letter-spacing:0.048px;">Размещение объекта</span><div style="left:1298px;top:103px;width:54px;height:19px;background:linear-gradient(#f2f2f2,#ebebeb 50%,#dddddd 50%,#cfcfcf);border:1px solid #898c95;border-bottom:none"></div><span id="t22" class="t " style="left:1302px;top:105.0px;height:15px;line-height:15px;font-size:11px;color:#000;letter-spacing:-0.054px;">Слайсер</span><div style="left:1352px;top:103px;width:99px;height:19px;background:linear-gradient(#f2f2f2,#ebebeb 50%,#dddddd 50%,#cfcfcf);border:1px solid #898c95;border-bottom:none"></div><span id="t23" class="t " style="left:1358px;top:105.0px;height:15px;line-height:15px;font-size:11px;color:#000;letter-spacing:-0.097px;">Редактор G-Кода</span><div style="left:1451px;top:103px;width:73px;height:19px;background:linear-gradient(#f2f2f2,#ebebeb 50%,#dddddd 50%,#cfcfcf);border:1px solid #898c95;border-bottom:none"></div><span id="t24" class="t " style="left:1457px;top:105.0px;height:15px;line-height:15px;font-size:11px;color:#000;letter-spacing:-0.016px;">Управление</span><div style="left:1176px;top:124px;width:500px;height:24px;background:linear-gradient(#fdfdfd,#f1f1f1)"></div><svg style="left:1181px;top:129px" width="12" height="12" viewBox="0 0 12 12"><g transform="scale(0.5)"><path d="M1.5,1 h17.5 l3.5,3.5 v17 q0,1.5 -1.5,1.5 h-19.5 q-1.5,0 -1.5,-1.5 v-19 q0,-1.5 1.5,-1.5 z" fill="#5a5a5a"/><rect x="5" y="1" width="13" height="8" fill="#d4d4d4"/><rect x="13.5" y="2.5" width="3" height="5" fill="#5a5a5a"/></g></svg><svg style="left:1203px;top:128px" width="14" height="14" viewBox="0 0 14 14"><circle cx="7" cy="7" r="6.3" fill="#5a5a5a"/><rect x="3" y="5.9" width="8" height="2.2" fill="#fff"/><rect x="5.9" y="3" width="2.2" height="8" fill="#fff"/></svg><svg style="left:1226px;top:128px" width="14" height="14" viewBox="0 0 14 14"><circle cx="7" cy="7" r="6.3" fill="#7a7a7a"/><rect x="3" y="5.9" width="8" height="2.2" fill="#fff"/></svg><svg style="left:1250px;top:128px" width="13" height="14" viewBox="0 0 13 14"><rect x="1" y="2.5" width="6.5" height="8" rx="1" fill="#fff" stroke="#5a5a5a" stroke-width="1.4"/><rect x="5.5" y="4.5" width="6.5" height="8" rx="1" fill="#fff" stroke="#5a5a5a" stroke-width="1.4"/><rect x="3" y="1" width="3" height="2" fill="#5a5a5a"/></svg><svg style="left:1272px;top:129px" width="15" height="12" viewBox="0 0 15 12"><rect x="0" y="0.0" width="3" height="3" fill="#b9b9b9"/><rect x="0" y="4.3" width="3" height="3" fill="#b9b9b9"/><rect x="0" y="8.6" width="3" height="3" fill="#b9b9b9"/><rect x="4" y="0.0" width="3" height="3" fill="#b9b9b9"/><rect x="4" y="4.3" width="3" height="3" fill="#b9b9b9"/><rect x="4" y="8.6" width="3" height="3" fill="#b9b9b9"/><rect x="8" y="0.0" width="3" height="3" fill="#b9b9b9"/><rect x="8" y="4.3" width="3" height="3" fill="#b9b9b9"/><rect x="8" y="8.6" width="3" height="3" fill="#b9b9b9"/><rect x="12" y="0.0" width="3" height="3" fill="#b9b9b9"/><rect x="12" y="4.3" width="3" height="3" fill="#b9b9b9"/><rect x="12" y="8.6" width="3" height="3" fill="#b9b9b9"/></svg><svg style="left:1295px;top:128px" width="14" height="14" viewBox="0 0 14 14"><circle cx="7" cy="7" r="4" fill="none" stroke="#5a5a5a" stroke-width="1.6"/><g fill="#5a5a5a"><polygon points="7,0 9.5,3 4.5,3"/><polygon points="7,14 9.5,11 4.5,11"/><polygon points="0,7 3,4.5 3,9.5"/><polygon points="14,7 11,4.5 11,9.5"/></g></svg><svg style="left:1318px;top:128px" width="14" height="14" viewBox="0 0 14 14"><path d="M7,1 V11" stroke="#5a5a5a" stroke-width="2.6"/><path d="M1.5,6.5 L7,12.5 L12.5,6.5" fill="none" stroke="#5a5a5a" stroke-width="2.6"/></svg><svg style="left:1340px;top:126px" width="17" height="17" viewBox="0 0 17 17"><path d="M2,5 Q3,1.5 6.5,3 L9,6" fill="none" stroke="#5a5a5a" stroke-width="2"/><path d="M15,11.5 Q14.5,16 10.5,14 L8,11" fill="none" stroke="#5a5a5a" stroke-width="2"/><path d="M2.5,6 Q4.5,9 8,8.5 M9,8 Q12,7 14.5,10.5" fill="none" stroke="#5a5a5a" stroke-width="1.6"/><g stroke="#5a5a5a" stroke-width="1"><line x1="11" y1="1" x2="10.5" y2="4"/><line x1="14" y1="2.5" x2="12.5" y2="5"/><line x1="16" y1="6" x2="13.5" y2="6.5"/><line x1="3" y1="16" x2="4.5" y2="13"/><line x1="0.5" y1="11.5" x2="3.5" y2="11"/></g></svg><svg style="left:1362px;top:126px" width="18" height="18" viewBox="0 0 18 18"><rect x="0" y="9" width="17" height="8" fill="#5ba3ba"/><line x1="8.5" y1="3" x2="8.5" y2="14" stroke="#5a5a5a" stroke-width="2"/><polygon points="8.5,0 12,4.5 5,4.5" fill="#5a5a5a"/><line x1="5" y1="14.5" x2="12" y2="14.5" stroke="#5a5a5a" stroke-width="1.6"/></svg><svg style="left:1390px;top:128px" width="9" height="14" viewBox="0 0 9 14"><circle cx="4.5" cy="2" r="1.9" fill="#5a5a5a"/><path d="M1.5,5 H6 V11.5 H7.8 V13.5 H1.2 V11.5 H3 V7 H1.5 Z" fill="#5a5a5a"/></svg><div style="left:1176px;top:148px;width:500px;height:147px;background:#fff;border:1px solid #828790"></div><div style="left:1177px;top:149px;width:498px;height:22px;background:linear-gradient(#ffffff,#f7f8fa 60%,#f1f2f4)"></div><div style="left:1177px;top:171px;width:498px;height:1px;background:#d5d5d5"></div><div style="left:1546px;top:149px;width:1px;height:145px;background:linear-gradient(#dfe1e5 0,#dfe1e5 22px,#f0f0f0 22px)"></div><div style="left:1596px;top:149px;width:1px;height:145px;background:linear-gradient(#dfe1e5 0,#dfe1e5 22px,#f0f0f0 22px)"></div><div style="left:1646px;top:149px;width:1px;height:145px;background:linear-gradient(#dfe1e5 0,#dfe1e5 22px,#f0f0f0 22px)"></div><span id="t25" class="t " style="left:1184px;top:153.5px;height:15px;line-height:15px;font-size:11px;color:#000;letter-spacing:-0.586px;">Name</span><span id="t26" class="t " style="left:1552px;top:153.5px;height:15px;line-height:15px;font-size:11px;color:#000;letter-spacing:-0.477px;">Mesh</span><span id="t27" class="t " style="left:1601px;top:153.5px;height:15px;line-height:15px;font-size:11px;color:#000;letter-spacing:-0.398px;">Collision</span><div style="left:1198px;top:173px;width:348px;height:18px;background:#f0f0f0"></div><div style="left:1547px;top:173px;width:49px;height:18px;background:#fafafa"></div><div style="left:1177px;top:191px;width:498px;height:1px;background:#f0f0f0"></div><div style="left:1177px;top:208px;width:498px;height:1px;background:#f0f0f0"></div><div style="left:1177px;top:225px;width:498px;height:1px;background:#f0f0f0"></div><div style="left:1177px;top:242px;width:498px;height:1px;background:#f0f0f0"></div><div style="left:1177px;top:259px;width:498px;height:1px;background:#f0f0f0"></div><div style="left:1177px;top:276px;width:498px;height:1px;background:#f0f0f0"></div><span id="t28" class="t " style="left:1199px;top:175.0px;height:15px;line-height:15px;font-size:11px;color:#000;letter-spacing:-0.444px;">ррвввррррввр.stl</span><svg style="left:1564px;top:176px" width="14" height="13" viewBox="0 0 14 13"><path d="M1.5,1.5 L12,11.5 M12,1.5 L1.5,11.5" stroke="#c81414" stroke-width="2.6"/></svg><svg style="left:1613px;top:176px" width="16" height="13" viewBox="0 0 16 13"><path d="M1.5,7 L6,11 L14.5,2" fill="none" stroke="#3aa635" stroke-width="3"/></svg><svg style="left:1654.5px;top:176.5px" width="11" height="13" viewBox="0 0 11 13"><g transform="scale(0.52)"><g fill="#4a4a4a"><rect x="2" y="3" width="16" height="3" rx="1"/><rect x="7" y="0.5" width="6" height="3" rx="1"/><path d="M3.5,7 h13 l-1,15 q0,1.5 -1.5,1.5 h-8 q-1.5,0 -1.5,-1.5 z"/></g><g stroke="#fff" stroke-width="1.5"><line x1="7" y1="9.5" x2="7.3" y2="20.5"/><line x1="10" y1="9.5" x2="10" y2="20.5"/><line x1="13" y1="9.5" x2="12.7" y2="20.5"/></g></g></svg><span id="t29" class="t " style="left:1191px;top:303.5px;height:15px;line-height:15px;font-size:11px;color:#000;letter-spacing:-0.030px;">Перемещение</span><div style="left:1266px;top:304px;width:5px;height:14px;background:#fff"></div><span id="t30" class="t " style="left:1267px;top:303.5px;height:15px;line-height:15px;font-size:11px;color:#000;letter-spacing:0.000px;width:4px;overflow:hidden;">X</span><span id="t31" class="t " style="left:1192px;top:355.5px;height:15px;line-height:15px;font-size:11px;color:#000;letter-spacing:-0.121px;">Вращение</span><span id="t32" class="t " style="left:1263px;top:354.0px;height:16px;line-height:16px;font-size:12px;color:#000;letter-spacing:-0.016px;">X</span><div style="left:1278px;top:301px;width:49px;height:20px;background:#fff;border:1px solid #dde2e8;border-top-color:#b2b5bb"></div><span id="t33" class="t " style="left:1282px;top:304.0px;height:15px;line-height:15px;font-size:11px;color:#000;letter-spacing:-0.125px;">0</span><span id="t34" class="t " style="left:1332px;top:302.0px;height:16px;line-height:16px;font-size:12px;color:#000;letter-spacing:-0.016px;">Y</span><div style="left:1347px;top:301px;width:49px;height:20px;background:#fff;border:1px solid #dde2e8;border-top-color:#b2b5bb"></div><span id="t35" class="t " style="left:1351px;top:304.0px;height:15px;line-height:15px;font-size:11px;color:#000;letter-spacing:-0.125px;">0</span><span id="t36" class="t " style="left:1400px;top:302.0px;height:16px;line-height:16px;font-size:12px;color:#000;letter-spacing:0.656px;">Z</span><div style="left:1416px;top:301px;width:49px;height:20px;background:#fff;border:1px solid #dde2e8;border-top-color:#b2b5bb"></div><span id="t37" class="t " style="left:1420px;top:304.0px;height:15px;line-height:15px;font-size:11px;color:#000;letter-spacing:-0.125px;">0</span><div style="left:1278px;top:327px;width:49px;height:20px;background:#fff;border:1px solid #dde2e8;border-top-color:#b2b5bb"></div><span id="t38" class="t " style="left:1332px;top:328.0px;height:16px;line-height:16px;font-size:12px;color:#000;letter-spacing:-0.016px;">Y</span><div style="left:1347px;top:327px;width:49px;height:20px;background:#ebebeb;border:1px solid #b9b9b9;border-top-color:#b2b5bb"></div><span id="t39" class="t " style="left:1351px;top:330.0px;height:15px;line-height:15px;font-size:11px;color:#8a8a8a;letter-spacing:-0.125px;">1</span><span id="t40" class="t " style="left:1400px;top:328.0px;height:16px;line-height:16px;font-size:12px;color:#000;letter-spacing:0.656px;">Z</span><div style="left:1416px;top:327px;width:49px;height:20px;background:#ebebeb;border:1px solid #b9b9b9;border-top-color:#b2b5bb"></div><span id="t41" class="t " style="left:1420px;top:330.0px;height:15px;line-height:15px;font-size:11px;color:#8a8a8a;letter-spacing:-0.125px;">1</span><div style="left:1278px;top:353px;width:49px;height:20px;background:#fff;border:1px solid #dde2e8;border-top-color:#b2b5bb"></div><span id="t42" class="t " style="left:1282px;top:356.0px;height:15px;line-height:15px;font-size:11px;color:#000;letter-spacing:-0.125px;">0</span><span id="t43" class="t " style="left:1332px;top:354.0px;height:16px;line-height:16px;font-size:12px;color:#000;letter-spacing:-0.016px;">Y</span><div style="left:1347px;top:353px;width:49px;height:20px;background:#fff;border:1px solid #dde2e8;border-top-color:#b2b5bb"></div><span id="t44" class="t " style="left:1351px;top:356.0px;height:15px;line-height:15px;font-size:11px;color:#000;letter-spacing:-0.125px;">0</span><span id="t45" class="t " style="left:1400px;top:354.0px;height:16px;line-height:16px;font-size:12px;color:#000;letter-spacing:0.656px;">Z</span><div style="left:1416px;top:353px;width:49px;height:20px;background:#fff;border:1px solid #dde2e8;border-top-color:#b2b5bb"></div><span id="t46" class="t " style="left:1420px;top:356.0px;height:15px;line-height:15px;font-size:11px;color:#000;letter-spacing:-0.125px;">0</span><div style="left:1277px;top:328px;width:9px;height:18px;background:#fff"></div><span id="t47" class="t " style="left:1191px;top:329.5px;height:15px;line-height:15px;font-size:11px;color:#000;letter-spacing:-0.108px;">Масштабирование</span><svg style="left:1487px;top:331px" width="12" height="13" viewBox="0 0 12 13"><path d="M3,6 V4 Q3,1 6,1 Q9,1 9,4 V6" fill="none" stroke="#3c3c3c" stroke-width="1.8"/><rect x="1" y="5.5" width="10" height="7" rx="1" fill="#3c3c3c"/><rect x="5.3" y="7.5" width="1.4" height="3" fill="#bbb"/></svg><div style="left:1179px;top:395px;width:492px;height:205px;border:1px solid #d5dfe5;border-radius:3px"></div><div style="left:1185px;top:389px;width:76px;height:13px;background:#fff"></div><span id="t48" class="t " style="left:1187px;top:388.0px;height:15px;line-height:15px;font-size:11px;color:#000;letter-spacing:-0.214px;">Object Analysis</span><span id="t49" class="t " style="left:1188px;top:404.5px;height:15px;line-height:15px;font-size:11px;color:#000;letter-spacing:-0.293px;">Modified:</span><span id="t50" class="t " style="left:1553px;top:404.5px;height:15px;line-height:15px;font-size:11px;color:#000;letter-spacing:-0.318px;">Yes</span><span id="t51" class="t " style="left:1188px;top:422.5px;height:15px;line-height:15px;font-size:11px;color:#000;letter-spacing:-0.182px;">Manifold:</span><span id="t52" class="t " style="left:1553px;top:422.5px;height:15px;line-height:15px;font-size:11px;color:#d0202a;letter-spacing:-0.531px;">No</span><span id="t53" class="t " style="left:1188px;top:440.5px;height:15px;line-height:15px;font-size:11px;color:#000;letter-spacing:-0.198px;">Intersecting triangles:</span><span id="t54" class="t " style="left:1553px;top:440.5px;height:15px;line-height:15px;font-size:11px;color:#d0202a;letter-spacing:-0.120px;">162</span><span id="t55" class="t " style="left:1188px;top:458.5px;height:15px;line-height:15px;font-size:11px;color:#000;letter-spacing:-0.502px;">Normals:</span><span id="t56" class="t " style="left:1553px;top:458.5px;height:15px;line-height:15px;font-size:11px;color:#1e8c28;letter-spacing:-0.275px;">Oriented</span><span id="t57" class="t " style="left:1188px;top:476.5px;height:15px;line-height:15px;font-size:11px;color:#000;letter-spacing:-0.162px;">Loop Edges:</span><span id="t58" class="t " style="left:1553px;top:476.5px;height:15px;line-height:15px;font-size:11px;color:#d0202a;letter-spacing:-0.125px;">3</span><span id="t59" class="t " style="left:1188px;top:494.5px;height:15px;line-height:15px;font-size:11px;color:#000;letter-spacing:-0.180px;">Highly Connected Edges:</span><span id="t60" class="t " style="left:1553px;top:494.5px;height:15px;line-height:15px;font-size:11px;color:#d0202a;letter-spacing:-0.125px;">12</span><span id="t61" class="t " style="left:1188px;top:512.5px;height:15px;line-height:15px;font-size:11px;color:#000;letter-spacing:-0.234px;">Points:</span><span id="t62" class="t " style="left:1553px;top:512.5px;height:15px;line-height:15px;font-size:11px;color:#000;letter-spacing:-0.121px;">2393</span><span id="t63" class="t " style="left:1188px;top:530.5px;height:15px;line-height:15px;font-size:11px;color:#000;letter-spacing:-0.375px;">Edges:</span><span id="t64" class="t " style="left:1553px;top:530.5px;height:15px;line-height:15px;font-size:11px;color:#000;letter-spacing:-0.121px;">7203</span><span id="t65" class="t " style="left:1188px;top:548.5px;height:15px;line-height:15px;font-size:11px;color:#000;letter-spacing:-0.336px;">Faces:</span><span id="t66" class="t " style="left:1553px;top:548.5px;height:15px;line-height:15px;font-size:11px;color:#000;letter-spacing:-0.121px;">4805</span><span id="t67" class="t " style="left:1188px;top:566.5px;height:15px;line-height:15px;font-size:11px;color:#000;letter-spacing:-0.433px;">Shells:</span><span id="t68" class="t " style="left:1553px;top:566.5px;height:15px;line-height:15px;font-size:11px;color:#000;letter-spacing:-0.125px;">4</span><div style="left:1188px;top:611px;width:13px;height:13px;background:linear-gradient(135deg,#d8d8d8,#fff);border:1px solid #8e8f8f;box-shadow:inset 0 0 0 1px #f4f4f4"></div><span id="t69" class="t " style="left:1207px;top:610.5px;height:15px;line-height:15px;font-size:11px;color:#000;letter-spacing:-0.224px;">Cut Objects</span><span id="t70" class="t " style="left:1191px;top:634.5px;height:15px;line-height:15px;font-size:11px;color:#000;letter-spacing:-0.393px;">Position</span><div style="left:1260px;top:640px;width:409px;height:6px;background:linear-gradient(#a6a6a6,#c4c4c4 45%,#e2e2e2);border-radius:2px"></div><div style="left:1459px;top:634px;width:9px;height:19px;background:linear-gradient(90deg,#f6f6f6,#dedede);border:1px solid #a9a9a9;border-radius:3px"></div><span id="t71" class="t " style="left:1191px;top:662.5px;height:15px;line-height:15px;font-size:11px;color:#000;letter-spacing:-0.141px;">Inclination</span><div style="left:1260px;top:668px;width:409px;height:6px;background:linear-gradient(#a6a6a6,#c4c4c4 45%,#e2e2e2);border-radius:2px"></div><div style="left:1260px;top:662px;width:9px;height:19px;background:linear-gradient(90deg,#f6f6f6,#dedede);border:1px solid #a9a9a9;border-radius:3px"></div><span id="t72" class="t " style="left:1191px;top:690.5px;height:15px;line-height:15px;font-size:11px;color:#000;letter-spacing:-0.393px;">Azimuth</span><div style="left:1260px;top:696px;width:409px;height:6px;background:linear-gradient(#a6a6a6,#c4c4c4 45%,#e2e2e2);border-radius:2px"></div><div style="left:1260px;top:690px;width:9px;height:19px;background:linear-gradient(90deg,#f6f6f6,#dedede);border:1px solid #a9a9a9;border-radius:3px"></div><div style="left:0px;top:963px;width:1678px;height:25px;background:#fff;border:1px solid #6a6a6a"></div><span id="t73" class="t " style="left:7px;top:968.5px;height:15px;line-height:15px;font-size:11px;color:#000;letter-spacing:0.090px;">Показывать в журнале:</span><div style="left:143px;top:970px;width:12px;height:12px;border-radius:6px;border:1px solid #24466e;background:radial-gradient(circle at 42% 38%,#dcf7ff,#7fd2f6 75%)"></div><span id="t74" class="t " style="left:157px;top:968.5px;height:15px;line-height:15px;font-size:11px;color:#000;letter-spacing:0.056px;">Команды</span><div style="left:228px;top:970px;width:12px;height:12px;border-radius:6px;border:1px solid #24466e;background:radial-gradient(circle at 42% 38%,#6f8fdc,#1a2c74 75%)"></div><span id="t75" class="t " style="left:242px;top:968.5px;height:15px;line-height:15px;font-size:11px;color:#000;letter-spacing:-0.539px;">Инфо</span><div style="left:293px;top:970px;width:12px;height:12px;border-radius:6px;border:1px solid #24466e;background:radial-gradient(circle at 42% 38%,#dcf7ff,#7fd2f6 75%)"></div><span id="t76" class="t " style="left:308px;top:968.5px;height:15px;line-height:15px;font-size:11px;color:#000;letter-spacing:-0.078px;">Предупраждения</span><div style="left:418px;top:970px;width:12px;height:12px;border-radius:6px;border:1px solid #24466e;background:radial-gradient(circle at 42% 38%,#dcf7ff,#7fd2f6 75%)"></div><span id="t77" class="t " style="left:432px;top:968.5px;height:15px;line-height:15px;font-size:11px;color:#000;letter-spacing:-0.133px;">Ошибки</span><div style="left:496px;top:970px;width:12px;height:12px;border-radius:6px;border:1px solid #24466e;background:radial-gradient(circle at 42% 38%,#dcf7ff,#7fd2f6 75%)"></div><span id="t78" class="t " style="left:511px;top:968.5px;height:15px;line-height:15px;font-size:11px;color:#000;letter-spacing:-0.034px;">Подтверждение</span><div style="left:615px;top:970px;width:12px;height:12px;border-radius:6px;border:1px solid #24466e;background:radial-gradient(circle at 42% 38%,#dcf7ff,#7fd2f6 75%)"></div><span id="t79" class="t " style="left:630px;top:968.5px;height:15px;line-height:15px;font-size:11px;color:#000;letter-spacing:0.101px;">Автопрокрутка</span><svg style="left:732px;top:970px" width="11" height="13" viewBox="0 0 11 13"><g transform="scale(0.5)"><g fill="#555"><rect x="2" y="3" width="16" height="3" rx="1"/><rect x="7" y="0.5" width="6" height="3" rx="1"/><path d="M3.5,7 h13 l-1,15 q0,1.5 -1.5,1.5 h-8 q-1.5,0 -1.5,-1.5 z"/></g><g stroke="#fff" stroke-width="1.5"><line x1="7" y1="9.5" x2="7.3" y2="20.5"/><line x1="10" y1="9.5" x2="10" y2="20.5"/><line x1="13" y1="9.5" x2="12.7" y2="20.5"/></g></g></svg><span id="t80" class="t " style="left:747px;top:968.5px;height:15px;line-height:15px;font-size:11px;color:#000;letter-spacing:-0.102px;">Очистить журнал</span><svg style="left:857px;top:970px" width="13" height="13" viewBox="0 0 13 13"><rect x="1" y="2.5" width="6.5" height="8" rx="1" fill="#fff" stroke="#555" stroke-width="1.3"/><rect x="5" y="4.5" width="6.5" height="7.5" rx="1" fill="#fff" stroke="#555" stroke-width="1.3"/><rect x="3" y="1" width="3" height="2" fill="#555"/></svg><span id="t81" class="t " style="left:874px;top:968.5px;height:15px;line-height:15px;font-size:11px;color:#000;letter-spacing:-0.023px;">Копировать</span><div style="left:0px;top:988px;width:1680px;height:21px;background:#f0eeee"></div><span id="t82" class="t " style="left:4px;top:991.8px;height:15.5px;line-height:15.5px;font-size:11.5px;color:#000;letter-spacing:0.490px;">Отключено</span><span id="t83" class="t " style="left:76px;top:991.8px;height:15.5px;line-height:15.5px;font-size:11.5px;color:#000;letter-spacing:0.156px;">-</span><span id="t84" class="t " style="left:95px;top:991.8px;height:15.5px;line-height:15.5px;font-size:11.5px;color:#000;letter-spacing:0.350px;">Готов</span><div style="left:131px;top:992px;width:214px;height:14px;background:linear-gradient(#dcdcdc,#e9e9e9 40%,#d2d2d2);border:1px solid #b0b0b0;border-radius:2px"></div><span id="t85" class="t " style="left:348px;top:991.8px;height:15.5px;line-height:15.5px;font-size:11.5px;color:#000;letter-spacing:-0.520px;">1503 FPS</span><div style="left:0px;top:1009px;width:1680px;height:41px;background:linear-gradient(#a8c2e0 0%,#a3bede 50%,#9fbbdc 100%);border-top:1px solid #55657d"></div><div style="left:0px;top:1010px;width:1680px;height:1px;background:#c9daee"></div><div style="left:1300px;top:1011px;width:380px;height:39px;background:linear-gradient(90deg,rgba(150,178,212,0),rgba(146,175,210,.8) 40%)"></div><div style="left:6px;top:1012px;width:37px;height:37px;border-radius:19px;background:radial-gradient(circle at 50% 50%,#5a1c3c 0%,#6a2046 45%,#a3245c 62%,#d23372 74%,#7a1c46 88%,#3a1830 100%);border:1px solid #4a2a4a"></div><svg style="left:10px;top:1016px" width="28" height="28" viewBox="0 0 28 28"><g fill="none" stroke="#ff4a92" stroke-width="1.5"><path d="M14,3.5 L23.1,19.2 H4.9 Z"/><path d="M14,24.5 L4.9,8.8 H23.1 Z"/><path d="M14,3.5 V24.5 M4.9,8.8 L23.1,19.2 M23.1,8.8 L4.9,19.2" stroke-width="1"/></g></svg><svg style="left:73px;top:1013px" width="34" height="34" viewBox="0 0 34 34"><circle cx="17" cy="17" r="15" fill="rgba(200,225,250,.35)" stroke="#35a0e6" stroke-width="1.8"/><text x="17" y="25" text-anchor="middle" font-family="Liberation Sans,sans-serif" font-weight="bold" font-style="italic" font-size="24" fill="none" stroke="#2d9ae8" stroke-width="1.3">e</text><path d="M4,14 Q17,1 31,9" fill="none" stroke="#4eb0f0" stroke-width="1.8"/></svg><div style="left:122px;top:1011px;width:58px;height:39px;background:linear-gradient(rgba(255,255,255,.45),rgba(255,255,255,.18) 48%,rgba(255,255,255,.05) 52%,rgba(255,255,255,.25));border:1px solid #6f87a8;border-radius:3px;box-shadow:inset 0 0 0 1px rgba(255,255,255,.5)"></div><div style="left:246px;top:1011px;width:58px;height:39px;background:linear-gradient(rgba(255,255,255,.45),rgba(255,255,255,.18) 48%,rgba(255,255,255,.05) 52%,rgba(255,255,255,.25));border:1px solid #6f87a8;border-radius:3px;box-shadow:inset 0 0 0 1px rgba(255,255,255,.5)"></div><div style="left:308px;top:1011px;width:58px;height:39px;background:linear-gradient(rgba(255,255,255,.45),rgba(255,255,255,.18) 48%,rgba(255,255,255,.05) 52%,rgba(255,255,255,.25));border:1px solid #6f87a8;border-radius:3px;box-shadow:inset 0 0 0 1px rgba(255,255,255,.5)"></div><div style="left:370px;top:1011px;width:58px;height:39px;background:linear-gradient(rgba(255,255,255,.45),rgba(255,255,255,.18) 48%,rgba(255,255,255,.05) 52%,rgba(255,255,255,.25));border:1px solid #6f87a8;border-radius:3px;box-shadow:inset 0 0 0 1px rgba(255,255,255,.5)"></div><div style="left:432px;top:1011px;width:58px;height:39px;background:linear-gradient(rgba(255,255,255,.45),rgba(255,255,255,.18) 48%,rgba(255,255,255,.05) 52%,rgba(255,255,255,.25));border:1px solid #6f87a8;border-radius:3px;box-shadow:inset 0 0 0 1px rgba(255,255,255,.5)"></div><div style="left:494px;top:1011px;width:58px;height:39px;background:linear-gradient(rgba(255,255,255,.45),rgba(255,255,255,.18) 48%,rgba(255,255,255,.05) 52%,rgba(255,255,255,.25));border:1px solid #6f87a8;border-radius:3px;box-shadow:inset 0 0 0 1px rgba(255,255,255,.5)"></div><div style="left:556px;top:1011px;width:58px;height:39px;background:linear-gradient(rgba(255,255,255,.45),rgba(255,255,255,.18) 48%,rgba(255,255,255,.05) 52%,rgba(255,255,255,.25));border:1px solid #6f87a8;border-radius:3px;box-shadow:inset 0 0 0 1px rgba(255,255,255,.5)"></div><svg style="left:133px;top:1016px" width="36" height="30" viewBox="0 0 36 30"><rect x="3" y="5" width="30" height="22" rx="2" fill="#d8c9d8" stroke="#c98aa0" stroke-width="1.2"/><rect x="5" y="2" width="12" height="5" fill="#e2b57a" stroke="#c99a5a"/><rect x="6" y="11" width="24" height="15" fill="#e8e2f0" stroke="#b0a4c8"/><path d="M18,13 l7,6 h-2.5 v5 h-9 v-5 h-2.5 z" fill="#fff" stroke="#9aa4c4" stroke-width="0.8"/></svg><svg style="left:195px;top:1013px" width="34" height="34" viewBox="0 0 34 34"><circle cx="17" cy="17" r="15" fill="rgba(205,226,248,.5)" stroke="#4f9fe8" stroke-width="1.8"/><circle cx="17" cy="17" r="12" fill="none" stroke="#7fbaf0" stroke-width="1"/><path d="M13,10 L23,8 V20 a3,2.5 0 1 1 -2,-2.3 V12 L15,13.3 V22.5 a3,2.5 0 1 1 -2,-2.3 Z" fill="#f08a1e"/></svg><svg style="left:259px;top:1014px" width="33" height="33" viewBox="0 0 33 33"><circle cx="16.5" cy="16.5" r="15.5" fill="#e23b2e"/><path d="M16.5,16.5 L3.2,8.6 A15.5,15.5 0 0 0 10,30.6 Z" fill="#2da94f"/><path d="M16.5,16.5 L10,30.6 A15.5,15.5 0 0 0 31.6,13 L18,13 Z" fill="#fbc116"/><circle cx="16.5" cy="16.5" r="7" fill="#fff"/><circle cx="16.5" cy="16.5" r="5.6" fill="#4a8af4"/></svg><svg style="left:320px;top:1013px" width="35" height="35" viewBox="0 0 35 35"><circle cx="17.5" cy="17.5" r="16.5" fill="#62a81e" stroke="#4c8a14" stroke-width="1.5"/><path d="M9,9 h5 v11 q0,4 3.5,4 q3.5,0 3.5,-4 v-11 h5 v18 h-4.5 v-2 q-2,2.6 -5,2.6 q-3,0 -4.5,-2 v6 h-5 z" fill="#fff"/></svg><svg style="left:383px;top:1014px" width="36" height="34" viewBox="0 0 36 34"><circle cx="15" cy="15" r="13.5" fill="#1ea1e8"/><circle cx="8" cy="8" r="6.5" fill="#1ea1e8"/><circle cx="22" cy="22" r="6.5" fill="#1ea1e8"/><text x="15" y="23" text-anchor="middle" font-family="Liberation Sans,sans-serif" font-weight="bold" font-size="22" fill="#fff">S</text><circle cx="27" cy="26" r="6" fill="#f5a623" stroke="#c97d10"/><text x="27" y="29.5" text-anchor="middle" font-family="Liberation Sans,sans-serif" font-size="9" fill="#222">4</text></svg><svg style="left:443px;top:1013px" width="36" height="35" viewBox="0 0 36 35"><rect x="1" y="1" width="33" height="33" fill="#1c1c1c"/><rect x="1" y="24" width="33" height="10" fill="#c8141e"/><rect x="20" y="3" width="14" height="20" fill="#7a7f86"/><path d="M4,27 L14,3 H21 L31,27 H24.5 L22.8,22 H12.5 L10.8,27 Z M14,17.5 H21.3 L17.6,7.5 Z" fill="#f4f4f4" stroke="#999" stroke-width="0.6"/></svg><svg style="left:509px;top:1016px" width="30" height="32" viewBox="0 0 30 32"><path d="M15,1 L25.5,9 Q28,17 25.5,25 Q15,31 4.5,25 Q2,17 4.5,9 Z" fill="#f6f2f2" stroke="#b8b0b0" stroke-width="1.2"/><text x="15" y="24.5" text-anchor="middle" font-family="Liberation Sans,sans-serif" font-weight="bold" font-size="21" fill="#d8100c">R</text></svg><svg style="left:570px;top:1015px" width="34" height="32" viewBox="0 0 34 32"><rect x="3" y="3" width="28" height="24" fill="#2a7fc4"/><rect x="5" y="5" width="24" height="20" fill="#7fc0e8"/><path d="M5,19 Q12,12 18,18 T29,15 V25 H5 Z" fill="#4a9a5a"/><path d="M5,21 Q14,17 29,20 V25 H5 Z" fill="#2f6f9e"/><g fill="#5ab0ea"><path d="M0,0 h8 v3 h-5 v5 h-3 z"/><path d="M34,0 h-8 v3 h5 v5 h3 z"/><path d="M0,31 h8 v-3 h-5 v-5 h-3 z"/><path d="M34,31 h-8 v-3 h5 v-5 h3 z"/></g></svg><span id="t86" class="t " style="left:1319px;top:1019.2px;height:15.5px;line-height:15.5px;font-size:11.5px;color:#fff;letter-spacing:-0.812px;">RU</span><svg style="left:1349px;top:1021px" width="18" height="18" viewBox="0 0 18 18"><rect x="1" y="2" width="9" height="7" fill="#fff" stroke="#2a6fb8"/><rect x="4" y="5" width="9" height="7" fill="#bfe0c8" stroke="#2a8a4a"/><rect x="8" y="8" width="9" height="8" fill="#e23a2e" stroke="#8a1a14"/></svg><svg style="left:1372px;top:1021px" width="18" height="18" viewBox="0 0 18 18"><rect x="1" y="6" width="14" height="9" fill="#e8e8e8" stroke="#333"/><path d="M3,6 l4,-4 h8 l-3,4" fill="#c8c8c8" stroke="#333"/><rect x="3" y="8" width="3" height="2" fill="#2a8ae0"/><rect x="3" y="11" width="3" height="2" fill="#e2b020"/><rect x="8" y="9" width="5" height="4" fill="#444"/><path d="M12,1 l4,3 -4,9" fill="none" stroke="#111" stroke-width="1.5"/></svg><svg style="left:1397px;top:1021px" width="18" height="18" viewBox="0 0 18 18"><circle cx="9" cy="9" r="8.5" fill="#62a81e"/><path d="M5,4.5 h2.6 v6 q0,2 1.7,2 q1.7,0 1.7,-2 v-6 h2.6 v9.5 h-2.4 v-1 q-1,1.3 -2.6,1.3 q-1.5,0 -2.2,-1 v3 h-2.6 z" fill="#fff"/></svg><svg style="left:1420px;top:1020px" width="18" height="20" viewBox="0 0 18 20"><rect x="1" y="1" width="16" height="18" rx="3" fill="#1a8ad8" stroke="#e8f4ff" stroke-width="1.2"/><circle cx="9" cy="10" r="5.5" fill="#fff"/><path d="M5,10 l3,-2.2 v4.4 z M13,10 l-3,-2.2 v4.4 z" fill="#1a8ad8"/></svg><svg style="left:1444px;top:1021px" width="18" height="18" viewBox="0 0 18 18"><circle cx="8" cy="8" r="7.5" fill="#4cb830"/><circle cx="11.5" cy="11.5" r="5.6" fill="#f5a623" stroke="#b8780e" stroke-width="0.8"/><text x="11.5" y="14.6" text-anchor="middle" font-family="Liberation Sans,sans-serif" font-size="8.5" fill="#222">4</text></svg><svg style="left:1467px;top:1021px" width="18" height="18" viewBox="0 0 18 18"><g stroke="#d84a28" stroke-width="1.6" fill="none"><path d="M2,14 L8,9 L6,3"/><path d="M8,9 L15,6"/><path d="M8,9 L13,15"/><path d="M8,9 L2,7"/></g><circle cx="8" cy="9" r="2.8" fill="#e8603a"/></svg><svg style="left:1491px;top:1021px" width="18" height="18" viewBox="0 0 18 18"><path d="M9,16 L2,8.5 Q0.5,3.5 5,3 Q8,3 9,6 Q10,3 13,3 Q17.5,3.5 16,8.5 Z" fill="#fff" stroke="#333" stroke-width="1"/><path d="M9,6 L7.5,9 L10,10.5 L8.5,13" fill="none" stroke="#333" stroke-width="1.2"/></svg><svg style="left:1514px;top:1020px" width="20" height="20" viewBox="0 0 20 20"><circle cx="10" cy="10" r="9.5" fill="#d81e28"/><path d="M4,5 L13,10 L4,15 V12 L8.5,10 L4,8 Z M9,5 L18,10 L9,15 V12.4 L13.5,10 L9,7.6 Z" fill="#fff"/></svg><svg style="left:1540px;top:1021px" width="18" height="18" viewBox="0 0 18 18"><rect x="5" y="2" width="11" height="8" fill="#dfe9f5" stroke="#fff" stroke-width="1.4"/><path d="M10.5,10 v4 M7,15 h7" stroke="#fff" stroke-width="1.6"/><path d="M1.5,4 v9 M0,6 h3 M0,9 h3" stroke="#fff" stroke-width="1.3"/></svg><svg style="left:1565px;top:1021px" width="18" height="18" viewBox="0 0 18 18"><path d="M1,7 h3.5 l4.5,-4 v12 l-4.5,-4 h-3.5 z" fill="#fff"/><g fill="none" stroke="#fff" stroke-width="1.2"><path d="M11,6.5 q2,2.5 0,5"/><path d="M13,4.5 q3.5,4.5 0,9"/><path d="M15,2.8 q5,6.2 0,12.4"/></g></svg><span id="t87" class="t " style="left:1614px;top:1014.8px;height:15.5px;line-height:15.5px;font-size:11.5px;color:#fff;letter-spacing:-0.356px;">15:09</span><span id="t88" class="t " style="left:1599px;top:1030.8px;height:15.5px;line-height:15.5px;font-size:11.5px;color:#fff;letter-spacing:-0.256px;">03.09.2013</span><div style="left:1664px;top:1010px;width:16px;height:40px;background:linear-gradient(90deg,rgba(255,255,255,.15),rgba(255,255,255,.4));border-left:1px solid #6a82a6"></div></body></html>
